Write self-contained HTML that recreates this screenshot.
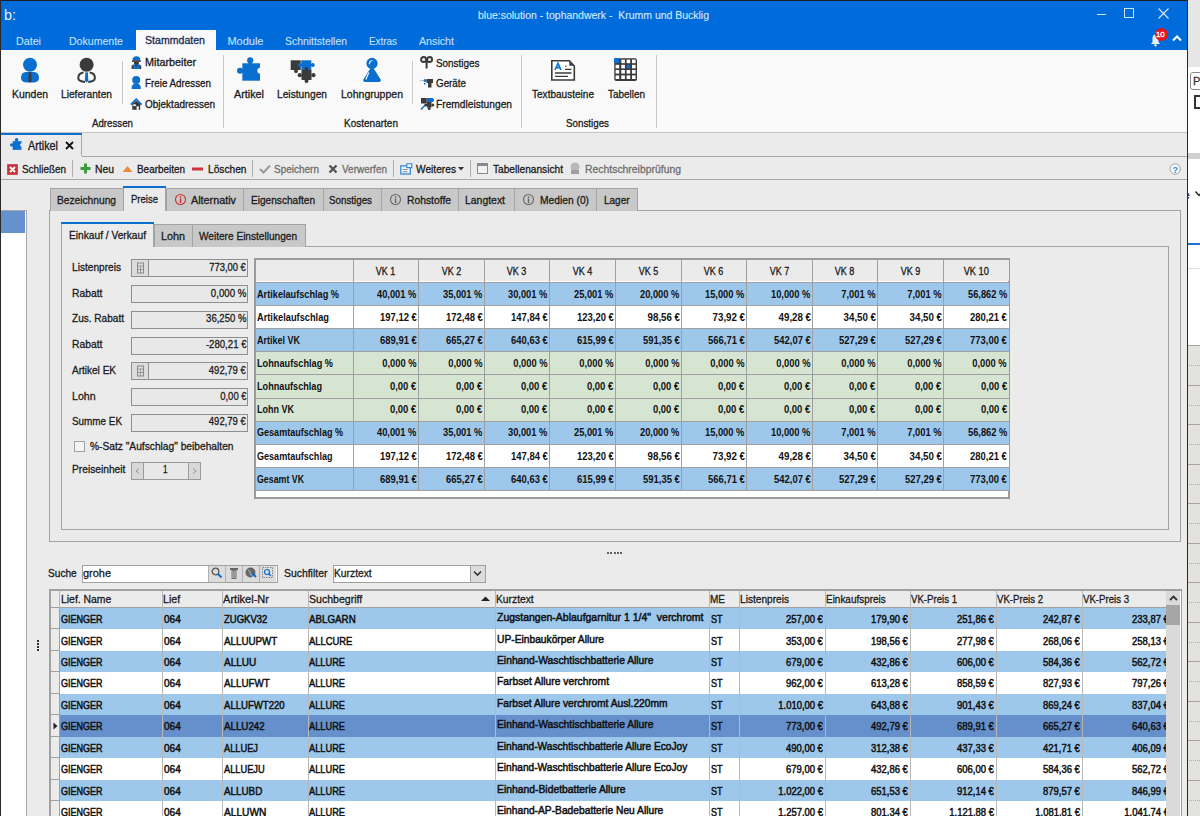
<!DOCTYPE html><html><head><meta charset="utf-8"><style>

*{margin:0;padding:0;box-sizing:border-box}
html,body{width:1200px;height:816px;overflow:hidden;background:#ebebeb;font-family:"Liberation Sans",sans-serif;font-size:11px;color:#1a1a1a}
.ab{position:absolute}
.t{position:absolute;white-space:nowrap;line-height:1;-webkit-text-stroke:0.3px currentColor}
svg{position:absolute;overflow:visible}

</style></head><body>
<div class="ab" style="left:0;top:0;width:1188px;height:50px;background:#006cdb"></div>
<div class="ab" style="left:0;top:0;width:1189px;height:1px;background:#1f1f1f"></div>
<div class="t" style="left:4.40px;top:6.90px;font-size:15px;color:#e8f2ff;transform:scaleX(0.9588);transform-origin:0 0;-webkit-text-stroke:0px currentColor;">b:</div>
<div class="t" style="left:478.40px;top:9.99px;font-size:11px;color:#d8ebff;transform:scaleX(0.9517);transform-origin:0 0;-webkit-text-stroke:0.1px currentColor;">blue:solution - tophandwerk -&nbsp; Krumm und Bucklig</div>
<div class="ab" style="left:1097px;top:14px;width:9px;height:1px;background:#cfe4ff"></div>
<div class="ab" style="left:1124px;top:8px;width:10px;height:10px;border:1px solid #cfe4ff"></div>
<svg style="left:1158px;top:8px" width="11" height="11"><path d="M0.5 0.5L10.5 10.5M10.5 0.5L0.5 10.5" stroke="#dbeaff" stroke-width="1.1"/></svg>
<svg style="left:1149px;top:33px" width="14" height="14"><path d="M2 11 L3.5 9 L3.5 5.5 Q3.5 1.5 6.5 1.5 Q9.5 1.5 9.5 5.5 L9.5 9 L11 11 Z" fill="#e6f1ff"/><circle cx="6.5" cy="12.3" r="1.2" fill="#e6f1ff"/></svg>
<div class="ab" style="left:1155px;top:28px;width:13px;height:13px;border-radius:50%;background:#e8141c"></div>
<div class="t" style="left:1156px;top:30.5px;font-size:8px;color:#fff;letter-spacing:-0.3px">10</div>
<svg style="left:1172px;top:35px" width="10" height="7"><path d="M1 5.5 L5 1.5 L9 5.5" stroke="#ffffff" stroke-width="2" fill="none"/></svg>
<div class="t" style="left:16.40px;top:36.09px;font-size:11px;color:#c7e1ff;transform:scaleX(0.9732);transform-origin:0 0;-webkit-text-stroke:0.1px currentColor;">Datei</div>
<div class="t" style="left:69.40px;top:36.09px;font-size:11px;color:#c7e1ff;transform:scaleX(0.9597);transform-origin:0 0;-webkit-text-stroke:0.1px currentColor;">Dokumente</div>
<div class="t" style="left:227.40px;top:36.09px;font-size:11px;color:#c7e1ff;-webkit-text-stroke:0.1px currentColor;">Module</div>
<div class="t" style="left:285.40px;top:36.09px;font-size:11px;color:#c7e1ff;transform:scaleX(0.9475);transform-origin:0 0;-webkit-text-stroke:0.1px currentColor;">Schnittstellen</div>
<div class="t" style="left:369.40px;top:36.09px;font-size:11px;color:#c7e1ff;transform:scaleX(0.8978);transform-origin:0 0;-webkit-text-stroke:0.1px currentColor;">Extras</div>
<div class="t" style="left:419.40px;top:36.09px;font-size:11px;color:#c7e1ff;transform:scaleX(0.9701);transform-origin:0 0;-webkit-text-stroke:0.1px currentColor;">Ansicht</div>
<div class="ab" style="left:136px;top:30px;width:80px;height:21px;background:#f9f9f9"></div>
<div class="t" style="left:145.40px;top:35.09px;font-size:11px;color:#1b2b55;transform:scaleX(0.9619);transform-origin:0 0;">Stammdaten</div>
<div class="ab" style="left:1px;top:50px;width:1186px;height:82px;background:#f9f9f9"></div>
<div class="ab" style="left:1px;top:132px;width:1186px;height:1px;background:#c4c4c4"></div>
<div class="ab" style="left:122px;top:61px;width:1px;height:43px;background:#c8c8c8"></div>
<div class="ab" style="left:223px;top:55px;width:1px;height:73px;background:#c8c8c8"></div>
<div class="ab" style="left:412px;top:61px;width:1px;height:43px;background:#c8c8c8"></div>
<div class="ab" style="left:521px;top:55px;width:1px;height:73px;background:#c8c8c8"></div>
<div class="ab" style="left:656px;top:55px;width:1px;height:73px;background:#c8c8c8"></div>
<div class="t" style="left:12.40px;top:88.59px;font-size:11px;color:#1a1a1a;transform:scaleX(0.9489);transform-origin:0 0;">Kunden</div>
<div class="t" style="left:61.40px;top:88.59px;font-size:11px;color:#1a1a1a;transform:scaleX(0.9265);transform-origin:0 0;">Lieferanten</div>
<div class="t" style="left:234.40px;top:88.59px;font-size:11px;color:#1a1a1a;transform:scaleX(0.9816);transform-origin:0 0;">Artikel</div>
<div class="t" style="left:277.40px;top:88.59px;font-size:11px;color:#1a1a1a;transform:scaleX(0.9289);transform-origin:0 0;">Leistungen</div>
<div class="t" style="left:340.90px;top:88.59px;font-size:11px;color:#1a1a1a;transform:scaleX(0.9561);transform-origin:0 0;">Lohngruppen</div>
<div class="t" style="left:531.80px;top:88.59px;font-size:11px;color:#1a1a1a;transform:scaleX(0.9132);transform-origin:0 0;">Textbausteine</div>
<div class="t" style="left:607.70px;top:88.59px;font-size:11px;color:#1a1a1a;transform:scaleX(0.9028);transform-origin:0 0;">Tabellen</div>
<div class="t" style="left:91.70px;top:118.19px;font-size:11px;color:#1a1a1a;transform:scaleX(0.8820);transform-origin:0 0;">Adressen</div>
<div class="t" style="left:344.40px;top:118.19px;font-size:11px;color:#1a1a1a;transform:scaleX(0.9102);transform-origin:0 0;">Kostenarten</div>
<div class="t" style="left:566.40px;top:118.19px;font-size:11px;color:#1a1a1a;transform:scaleX(0.8900);transform-origin:0 0;">Sonstiges</div>
<div class="t" style="left:145.40px;top:57.49px;font-size:11px;color:#1a1a1a;transform:scaleX(0.9814);transform-origin:0 0;">Mitarbeiter</div>
<div class="t" style="left:145.40px;top:78.19px;font-size:11px;color:#1a1a1a;transform:scaleX(0.8921);transform-origin:0 0;">Freie Adressen</div>
<div class="t" style="left:145.40px;top:98.59px;font-size:11px;color:#1a1a1a;transform:scaleX(0.9085);transform-origin:0 0;">Objektadressen</div>
<div class="t" style="left:435.80px;top:57.69px;font-size:11px;color:#1a1a1a;transform:scaleX(0.9004);transform-origin:0 0;">Sonstiges</div>
<div class="t" style="left:435.80px;top:78.19px;font-size:11px;color:#1a1a1a;transform:scaleX(0.8918);transform-origin:0 0;">Geräte</div>
<div class="t" style="left:435.80px;top:98.69px;font-size:11px;color:#1a1a1a;transform:scaleX(0.9275);transform-origin:0 0;">Fremdleistungen</div>
<svg style="left:20px;top:57px" width="20" height="27"><circle cx="10" cy="7.75" r="7" fill="#0a6fcf"/><path d="M1 21 Q1 15.2 6 15 L14 15 Q19 15.2 19 21 Q19 25 14 25.4 L6 25.4 Q1 25 1 21Z" fill="#0a6fcf"/><path d="M8.7 15.2 L11.3 15.2 L11.7 24.3 L10 25.5 L8.3 24.3Z" fill="#3a3a3a"/></svg>
<svg style="left:77px;top:57px" width="20" height="27"><circle cx="9.6" cy="7.75" r="7" fill="#3a3a3a"/><path d="M6.5 15.6 Q1.2 16.4 1.3 21.2 Q1.6 24.6 8 25 M12.7 15.6 Q18 16.4 17.9 21.2 Q17.6 24.6 11.2 25" stroke="#3a3a3a" stroke-width="2" fill="none"/><path d="M8.4 15.2 L10.8 15.2 L11.4 23.8 L9.6 25.4 L7.8 23.8Z" fill="#0a6fcf"/></svg>
<svg style="left:131px;top:56px" width="11" height="14"><path d="M1.5 4.5 Q1.5 0.3 5.4 0.3 Q9.3 0.3 9.3 4.5Z" fill="#0a6fcf"/><rect x="1" y="4.3" width="8.8" height="1.6" fill="#3a3a3a"/><rect x="3" y="5.9" width="4.8" height="2.4" fill="#3a3a3a"/><path d="M1 13 L1 10.5 Q1 8.3 3.2 8.3 L7.6 8.3 Q9.8 8.3 9.8 10.5 L9.8 13Z" fill="#0a6fcf"/><rect x="0.6" y="9.5" width="1.4" height="3.5" fill="#3a3a3a"/><rect x="8.8" y="9.5" width="1.4" height="3.5" fill="#3a3a3a"/><rect x="4" y="8.3" width="2.8" height="2" fill="#3a3a3a"/></svg>
<svg style="left:131px;top:75px" width="11" height="15"><circle cx="5.2" cy="5" r="4" fill="#0a6fcf"/><path d="M0.5 14 Q0.5 8.6 5.2 8.6 Q9.9 8.6 9.9 14Z" fill="#0a6fcf"/></svg>
<svg style="left:130px;top:98px" width="13" height="12"><path d="M0.8 6.6 L6.2 1.2 L11.6 6.6" stroke="#0a6fcf" stroke-width="1.7" fill="none"/><path d="M2.3 6 L6.2 2.7 L10.2 6 L10.2 11.7 L2.3 11.7Z" fill="#3a3a3a"/><rect x="3.3" y="6.3" width="2.5" height="1.8" fill="#fff"/><rect x="6.6" y="8.3" width="2.2" height="3.4" fill="#f9f9f9"/></svg>
<svg style="left:237px;top:57px" width="26" height="25"><rect x="5.3" y="6.3" width="17.7" height="17.4" fill="#0a6fcf"/><circle cx="13.2" cy="3.4" r="3.1" fill="#0a6fcf"/><rect x="11.6" y="4" width="3.2" height="3" fill="#0a6fcf"/><circle cx="3" cy="13.8" r="3" fill="#0a6fcf"/><rect x="3.5" y="12.2" width="3" height="3.2" fill="#0a6fcf"/><circle cx="23.3" cy="13.8" r="3" fill="#f9f9f9"/></svg>
<svg style="left:290px;top:58px" width="26" height="26"><path d="M0.7 2.3 H10.7 V12 H0.7Z" fill="#3a3a3a"/><circle cx="6" cy="13.2" r="1.9" fill="#3a3a3a"/><path d="M11.3 2.3 H21.3 V12 H11.3Z" fill="#0a6fcf"/><circle cx="10" cy="7" r="2" fill="#0a6fcf"/><circle cx="22.8" cy="7" r="2" fill="#0a6fcf"/><path d="M11.5 12 H21.5 V22 H11.5Z" fill="#3a3a3a"/><circle cx="9.8" cy="17.2" r="2.1" fill="#3a3a3a"/><circle cx="23.4" cy="17.2" r="2.1" fill="#3a3a3a"/><circle cx="16.5" cy="23" r="2" fill="#3a3a3a"/><circle cx="16.5" cy="11" r="2" fill="#3a3a3a"/></svg>
<svg style="left:362px;top:57px" width="22" height="26"><circle cx="10" cy="6.4" r="5.6" fill="#0a6fcf"/><path d="M7.4 7.2 Q7.4 3.8 10.4 3.5" stroke="#f9f9f9" stroke-width="1.2" fill="none"/><rect x="7.8" y="11" width="4.4" height="2.5" fill="#0a6fcf"/><path d="M7.3 13 L12.7 13 L18.6 22.6 Q19.2 25 17 25 L3 25 Q0.8 25 1.4 22.6Z" fill="#0a6fcf"/><path d="M6.8 15.5 L3.8 22.5" stroke="#f9f9f9" stroke-width="1.2"/></svg>
<svg style="left:420px;top:56px" width="14" height="13"><circle cx="3.6" cy="3.5" r="2.5" fill="none" stroke="#3a3a3a" stroke-width="1.9"/><circle cx="9.6" cy="3.5" r="2.5" fill="none" stroke="#3a3a3a" stroke-width="1.9"/><rect x="5.6" y="4.5" width="2" height="8" fill="#3a3a3a"/><rect x="5" y="4" width="3.2" height="2.4" fill="#3a3a3a"/></svg>
<svg style="left:420px;top:78px" width="14" height="11"><rect x="0" y="2" width="1.2" height="1" fill="#aaa"/><rect x="2" y="2" width="1.2" height="1" fill="#aaa"/><circle cx="5" cy="2.6" r="1.5" fill="#0a6fcf"/><rect x="4" y="5" width="1.5" height="1.5" fill="#0a6fcf"/><path d="M6.5 1 L13 1 L13 5 L11.5 5 L11.5 9.5 L8 9.5 L8 5 L6.5 5Z" fill="#3a3a3a"/></svg>
<svg style="left:420px;top:97px" width="14" height="14"><path d="M1 1 H6.8 V6.5 H1Z" fill="#3a3a3a"/><path d="M7 1 H13 V5 H7Z" fill="#0a6fcf"/><circle cx="13" cy="3" r="1.2" fill="#0a6fcf"/><path d="M7 5 H11.5 V10.5 H7Z" fill="#3a3a3a"/><circle cx="5.8" cy="8" r="1.6" fill="#3a3a3a"/><circle cx="12.8" cy="8" r="1.5" fill="#3a3a3a"/><circle cx="9.2" cy="11.5" r="1.5" fill="#3a3a3a"/><path d="M1 12.5 L4.8 8.5" stroke="#0a6fcf" stroke-width="1.5"/></svg>
<svg style="left:551px;top:60px" width="25" height="22"><path d="M0.8 0.8 L18.3 0.8 L23.3 6 L23.3 20 L0.8 20Z" fill="#fff" stroke="#3a3a3a" stroke-width="1.6"/><path d="M18.3 1.5 L18.3 5.8 L22.6 5.8" fill="#3a3a3a" stroke="none"/><path d="M4 10 L7 3.2 L10 10 M5.2 7.6 L8.8 7.6" stroke="#0a6fcf" stroke-width="1.6" fill="none"/><rect x="14.3" y="5.5" width="1.3" height="1.3" fill="#3a3a3a"/><path d="M14 9.3 H20.5 M4 13 H20.5 M4 16.3 H17" stroke="#3a3a3a" stroke-width="1.3"/></svg>
<svg style="left:614px;top:58px" width="24" height="24"><rect x="0.3" y="0.3" width="22.7" height="22.7" rx="2" fill="#3a3a3a"/><rect x="1.6" y="1.6" width="3.6" height="3.6" fill="#0a6fcf"/><rect x="1.6" y="6.8" width="3.6" height="3.6" fill="#fff"/><rect x="1.6" y="12.0" width="3.6" height="3.6" fill="#fff"/><rect x="1.6" y="17.4" width="3.6" height="3.6" fill="#fff"/><rect x="7.3" y="1.6" width="3.6" height="3.6" fill="#fff"/><rect x="7.3" y="6.8" width="3.6" height="3.6" fill="#fff"/><rect x="7.3" y="12.0" width="3.6" height="3.6" fill="#fff"/><rect x="7.3" y="17.4" width="3.6" height="3.6" fill="#fff"/><rect x="12.6" y="1.6" width="3.6" height="3.6" fill="#fff"/><rect x="12.6" y="6.8" width="3.6" height="3.6" fill="#0a6fcf"/><rect x="12.6" y="12.0" width="3.6" height="3.6" fill="#fff"/><rect x="12.6" y="17.4" width="3.6" height="3.6" fill="#fff"/><rect x="18.0" y="1.6" width="3.6" height="3.6" fill="#fff"/><rect x="18.0" y="6.8" width="3.6" height="3.6" fill="#fff"/><rect x="18.0" y="12.0" width="3.6" height="3.6" fill="#fff"/><rect x="18.0" y="17.4" width="3.6" height="3.6" fill="#fff"/><rect x="0" y="0" width="5.2" height="5" rx="1" fill="#0a6fcf"/></svg>
<div class="ab" style="left:1px;top:133px;width:1186px;height:23px;background:#ebebeb"></div>
<div class="ab" style="left:82px;top:156px;width:1105px;height:1px;background:#a9a9a9"></div>
<div class="ab" style="left:1px;top:133px;width:81px;height:2px;background:#0a6fcf"></div>
<div class="ab" style="left:81px;top:135px;width:1px;height:21px;background:#a9a9a9"></div>
<svg style="left:9.5px;top:138px" width="13" height="13"><g transform="scale(0.5)"><rect x="5.3" y="6.3" width="17.7" height="17.4" fill="#0a6fcf"/><circle cx="13.2" cy="3.6" r="3.4" fill="#0a6fcf"/><rect x="11.4" y="4" width="3.6" height="3" fill="#0a6fcf"/><circle cx="3.2" cy="13.8" r="3.2" fill="#0a6fcf"/><rect x="3.5" y="12" width="3" height="3.6" fill="#0a6fcf"/><circle cx="23.3" cy="13.8" r="3.2" fill="#ebebeb"/></g></svg>
<div class="t" style="left:28.10px;top:139.84px;font-size:12px;color:#1a1a1a;transform:scaleX(0.8997);transform-origin:0 0;">Artikel</div>
<svg style="left:65px;top:141px" width="9" height="9"><path d="M1 1L8 8M8 1L1 8" stroke="#111" stroke-width="1.8"/></svg>
<div class="ab" style="left:1px;top:179px;width:1186px;height:1px;background:#a9a9a9"></div>
<div class="ab" style="left:72px;top:160px;width:1px;height:17px;background:#b0b0b0"></div>
<div class="ab" style="left:252px;top:160px;width:1px;height:17px;background:#b0b0b0"></div>
<div class="ab" style="left:393px;top:160px;width:1px;height:17px;background:#b0b0b0"></div>
<div class="ab" style="left:470px;top:160px;width:1px;height:17px;background:#b0b0b0"></div>
<svg style="left:7px;top:164px" width="11" height="11"><rect x="0.7" y="0.7" width="9.6" height="9.6" fill="#c8343c" stroke="#c8343c"/><path d="M3 3L8 8M8 3L3 8" stroke="#fff" stroke-width="1.8"/></svg>
<div class="t" style="left:21.80px;top:163.79px;font-size:11px;color:#1a1a1a;transform:scaleX(0.8994);transform-origin:0 0;">Schließen</div>
<svg style="left:80px;top:163px" width="11" height="11"><path d="M4 0.5H7V4H10.5V7H7V10.5H4V7H0.5V4H4Z" fill="#3d9b3d"/></svg>
<div class="t" style="left:94.70px;top:163.79px;font-size:11px;color:#1a1a1a;transform:scaleX(0.9412);transform-origin:0 0;">Neu</div>
<svg style="left:122px;top:165px" width="11" height="8"><path d="M0.5 7 L5.5 1 L10.5 7Z" fill="#ef8a3c"/></svg>
<div class="t" style="left:136.70px;top:163.79px;font-size:11px;color:#1a1a1a;transform:scaleX(0.9019);transform-origin:0 0;">Bearbeiten</div>
<svg style="left:192px;top:167px" width="11" height="4"><rect x="0" y="0.5" width="11" height="3" fill="#c8343c"/></svg>
<div class="t" style="left:207.70px;top:163.79px;font-size:11px;color:#1a1a1a;transform:scaleX(0.9256);transform-origin:0 0;">Löschen</div>
<svg style="left:259px;top:164px" width="12" height="10"><path d="M1 5 L4.5 8.5 L11 1.5" stroke="#9a9a9a" stroke-width="2" fill="none"/></svg>
<div class="t" style="left:274.40px;top:163.79px;font-size:11px;color:#6f6f6f;transform:scaleX(0.9082);transform-origin:0 0;">Speichern</div>
<svg style="left:328px;top:164px" width="10" height="10"><path d="M1.5 1.5L8.5 8.5M8.5 1.5L1.5 8.5" stroke="#555" stroke-width="2.4"/></svg>
<div class="t" style="left:341.90px;top:163.79px;font-size:11px;color:#6f6f6f;transform:scaleX(0.9085);transform-origin:0 0;">Verwerfen</div>
<svg style="left:400px;top:163px" width="13" height="12"><rect x="0.8" y="2.8" width="9.5" height="8.2" fill="#eaf3fc" stroke="#3a8ad6" stroke-width="1.3"/><rect x="6.8" y="0.8" width="5" height="3.8" fill="#fff" stroke="#3a8ad6" stroke-width="1.2"/><path d="M2.8 6.5H7.5M2.8 8.8H7.5" stroke="#8a8a8a" stroke-width="1"/></svg>
<div class="t" style="left:415.90px;top:163.79px;font-size:11px;color:#1a1a1a;transform:scaleX(0.9259);transform-origin:0 0;">Weiteres</div>
<svg style="left:458px;top:167px" width="6" height="4"><path d="M0 0H6L3 3.5Z" fill="#333"/></svg>
<svg style="left:477px;top:163px" width="11" height="11"><rect x="0.5" y="0.5" width="10" height="10" fill="#f2f2f2" stroke="#8a8a8a"/><rect x="0.5" y="0.5" width="10" height="2.5" fill="#8a8a8a"/></svg>
<div class="t" style="left:492.70px;top:163.79px;font-size:11px;color:#1a1a1a;transform:scaleX(0.9230);transform-origin:0 0;">Tabellenansicht</div>
<svg style="left:569px;top:162px" width="12" height="13"><circle cx="6" cy="5" r="4.5" fill="#b8b8b8"/><rect x="2" y="8" width="8" height="4" fill="#a0a0a0"/></svg>
<div class="t" style="left:584.70px;top:163.79px;font-size:11px;color:#6f6f6f;transform:scaleX(0.9457);transform-origin:0 0;">Rechtschreibprüfung</div>
<svg style="left:1169px;top:163px" width="13" height="13"><circle cx="6.2" cy="6" r="5.2" fill="#f4f8fc" stroke="#9a9a9a" stroke-width="0.9"/><text x="6.2" y="9.6" font-size="9" font-weight="bold" text-anchor="middle" fill="#2a8ad8" font-family="Liberation Sans">?</text></svg>
<div class="ab" style="left:1px;top:210px;width:26px;height:606px;background:#fff;border-top:1px solid #a9a9a9;border-right:1px solid #a9a9a9"></div>
<div class="ab" style="left:1px;top:211px;width:24px;height:22px;background:#6591cf"></div>
<div class="ab" style="left:37px;top:640px;width:2px;height:2px;background:#333"></div>
<div class="ab" style="left:37px;top:643px;width:2px;height:2px;background:#333"></div>
<div class="ab" style="left:37px;top:646px;width:2px;height:2px;background:#333"></div>
<div class="ab" style="left:37px;top:649px;width:2px;height:2px;background:#333"></div>
<div class="ab" style="left:0;top:0;width:1px;height:816px;background:#2a2a2a"></div>
<div class="ab" style="left:49px;top:210px;width:1132px;height:332px;border:1px solid #a3a3a3"></div>
<div class="ab" style="left:50px;top:188px;width:74px;height:23px;background:#c8c8c8;border:1px solid #a3a3a3;border-bottom:none"></div>
<div class="t" style="left:57.00px;top:195.39px;font-size:11px;color:#1a1a1a;transform:scaleX(0.9275);transform-origin:0 0;">Bezeichnung</div>
<div class="ab" style="left:123px;top:186px;width:43px;height:25px;background:#ebebeb;border-left:1px solid #a3a3a3;border-right:1px solid #a3a3a3"></div>
<div class="ab" style="left:123px;top:186px;width:43px;height:2px;background:#0a6fcf"></div>
<div class="t" style="left:131.10px;top:194.39px;font-size:11px;color:#1a1a1a;transform:scaleX(0.8657);transform-origin:0 0;">Preise</div>
<div class="ab" style="left:166px;top:188px;width:78px;height:23px;background:#c8c8c8;border:1px solid #a3a3a3;border-bottom:none"></div>
<svg style="left:174.5px;top:194px" width="12" height="12"><circle cx="5.5" cy="5.5" r="5" fill="none" stroke="#c9302c" stroke-width="1.1"/><rect x="4.8" y="2.4" width="1.5" height="1.5" fill="#c9302c"/><rect x="4.8" y="4.6" width="1.5" height="4.4" fill="#c9302c"/></svg>
<div class="t" style="left:191.40px;top:195.39px;font-size:11px;color:#1a1a1a;transform:scaleX(0.9813);transform-origin:0 0;">Alternativ</div>
<div class="ab" style="left:243px;top:188px;width:81px;height:23px;background:#c8c8c8;border:1px solid #a3a3a3;border-bottom:none"></div>
<div class="t" style="left:250.80px;top:195.39px;font-size:11px;color:#1a1a1a;transform:scaleX(0.9180);transform-origin:0 0;">Eigenschaften</div>
<div class="ab" style="left:323px;top:188px;width:59px;height:23px;background:#c8c8c8;border:1px solid #a3a3a3;border-bottom:none"></div>
<div class="t" style="left:329.40px;top:195.39px;font-size:11px;color:#1a1a1a;transform:scaleX(0.8900);transform-origin:0 0;">Sonstiges</div>
<div class="ab" style="left:381px;top:188px;width:78px;height:23px;background:#c8c8c8;border:1px solid #a3a3a3;border-bottom:none"></div>
<svg style="left:389.5px;top:194px" width="12" height="12"><circle cx="5.5" cy="5.5" r="5" fill="none" stroke="#666" stroke-width="1.1"/><rect x="4.8" y="2.4" width="1.5" height="1.5" fill="#666"/><rect x="4.8" y="4.6" width="1.5" height="4.4" fill="#666"/></svg>
<div class="t" style="left:406.70px;top:195.39px;font-size:11px;color:#1a1a1a;transform:scaleX(0.9384);transform-origin:0 0;">Rohstoffe</div>
<div class="ab" style="left:458px;top:188px;width:57px;height:23px;background:#c8c8c8;border:1px solid #a3a3a3;border-bottom:none"></div>
<div class="t" style="left:465.40px;top:195.39px;font-size:11px;color:#1a1a1a;transform:scaleX(0.9478);transform-origin:0 0;">Langtext</div>
<div class="ab" style="left:514px;top:188px;width:83px;height:23px;background:#c8c8c8;border:1px solid #a3a3a3;border-bottom:none"></div>
<svg style="left:522.5px;top:194px" width="12" height="12"><circle cx="5.5" cy="5.5" r="5" fill="none" stroke="#666" stroke-width="1.1"/><rect x="4.8" y="2.4" width="1.5" height="1.5" fill="#666"/><rect x="4.8" y="4.6" width="1.5" height="4.4" fill="#666"/></svg>
<div class="t" style="left:539.70px;top:195.39px;font-size:11px;color:#1a1a1a;transform:scaleX(0.9319);transform-origin:0 0;">Medien (0)</div>
<div class="ab" style="left:596px;top:188px;width:42px;height:23px;background:#c8c8c8;border:1px solid #a3a3a3;border-bottom:none"></div>
<div class="t" style="left:603.90px;top:195.39px;font-size:11px;color:#1a1a1a;transform:scaleX(0.9062);transform-origin:0 0;">Lager</div>
<div class="ab" style="left:61px;top:246px;width:1108px;height:284px;border:1px solid #a3a3a3"></div>
<div class="ab" style="left:61px;top:222px;width:93px;height:25px;background:#ebebeb;border-left:1px solid #a3a3a3;border-right:1px solid #a3a3a3"></div>
<div class="ab" style="left:61px;top:222px;width:93px;height:2px;background:#0a6fcf"></div>
<div class="t" style="left:69.00px;top:229.99px;font-size:11px;color:#1a1a1a;transform:scaleX(0.9258);transform-origin:0 0;">Einkauf / Verkauf</div>
<div class="ab" style="left:154px;top:224px;width:39px;height:23px;background:#c8c8c8;border:1px solid #a3a3a3;border-bottom:none"></div>
<div class="t" style="left:160.70px;top:230.69px;font-size:11px;color:#1a1a1a;transform:scaleX(0.9802);transform-origin:0 0;">Lohn</div>
<div class="ab" style="left:192px;top:224px;width:114px;height:23px;background:#c8c8c8;border:1px solid #a3a3a3;border-bottom:none"></div>
<div class="t" style="left:199.40px;top:230.69px;font-size:11px;color:#1a1a1a;transform:scaleX(0.9175);transform-origin:0 0;">Weitere Einstellungen</div>
<div class="t" style="left:72.10px;top:261.99px;font-size:11px;color:#1a1a1a;transform:scaleX(0.9210);transform-origin:0 0;">Listenpreis</div>
<div class="ab" style="left:131px;top:259px;width:117px;height:18px;background:#e8e8e8;border:1px solid #8f8f8f"></div>
<div class="ab" style="left:132px;top:260px;width:17px;height:16px;background:#dcdcdc;border-right:1px solid #8f8f8f"></div>
<svg style="left:136px;top:262px" width="9" height="12"><rect x="1.5" y="1" width="6" height="10" fill="none" stroke="#8a8a8a"/><path d="M1.5 4H7.5M4.5 4V11M1.5 7.5H7.5" stroke="#8a8a8a" stroke-width="0.8"/></svg>
<div class="t" style="right:953.70px;top:261.99px;font-size:11px;color:#1a1a1a;transform:scaleX(0.8546);transform-origin:100% 0;">773,00 €</div>
<div class="t" style="left:72.10px;top:287.74px;font-size:11px;color:#1a1a1a;transform:scaleX(0.9376);transform-origin:0 0;">Rabatt</div>
<div class="ab" style="left:131px;top:285px;width:117px;height:18px;background:#e8e8e8;border:1px solid #8f8f8f"></div>
<div class="t" style="right:953.70px;top:287.74px;font-size:11px;color:#1a1a1a;transform:scaleX(0.8793);transform-origin:100% 0;">0,000 %</div>
<div class="t" style="left:72.10px;top:313.49px;font-size:11px;color:#1a1a1a;transform:scaleX(0.9145);transform-origin:0 0;">Zus. Rabatt</div>
<div class="ab" style="left:131px;top:311px;width:117px;height:18px;background:#e8e8e8;border:1px solid #8f8f8f"></div>
<div class="t" style="right:953.70px;top:313.49px;font-size:11px;color:#1a1a1a;transform:scaleX(0.8691);transform-origin:100% 0;">36,250 %</div>
<div class="t" style="left:72.10px;top:339.24px;font-size:11px;color:#1a1a1a;transform:scaleX(0.9376);transform-origin:0 0;">Rabatt</div>
<div class="ab" style="left:131px;top:337px;width:117px;height:18px;background:#e8e8e8;border:1px solid #8f8f8f"></div>
<div class="t" style="right:953.70px;top:339.24px;font-size:11px;color:#1a1a1a;transform:scaleX(0.8734);transform-origin:100% 0;">-280,21 €</div>
<div class="t" style="left:72.10px;top:364.99px;font-size:11px;color:#1a1a1a;transform:scaleX(0.9110);transform-origin:0 0;">Artikel EK</div>
<div class="ab" style="left:131px;top:362px;width:117px;height:18px;background:#e8e8e8;border:1px solid #8f8f8f"></div>
<div class="ab" style="left:132px;top:363px;width:17px;height:16px;background:#dcdcdc;border-right:1px solid #8f8f8f"></div>
<svg style="left:136px;top:365px" width="9" height="12"><rect x="1.5" y="1" width="6" height="10" fill="none" stroke="#8a8a8a"/><path d="M1.5 4H7.5M4.5 4V11M1.5 7.5H7.5" stroke="#8a8a8a" stroke-width="0.8"/></svg>
<div class="t" style="right:953.70px;top:364.99px;font-size:11px;color:#1a1a1a;transform:scaleX(0.8639);transform-origin:100% 0;">492,79 €</div>
<div class="t" style="left:72.10px;top:390.74px;font-size:11px;color:#1a1a1a;transform:scaleX(0.9639);transform-origin:0 0;">Lohn</div>
<div class="ab" style="left:131px;top:388px;width:117px;height:18px;background:#e8e8e8;border:1px solid #8f8f8f"></div>
<div class="t" style="right:953.70px;top:390.74px;font-size:11px;color:#1a1a1a;transform:scaleX(0.8629);transform-origin:100% 0;">0,00 €</div>
<div class="t" style="left:72.10px;top:416.49px;font-size:11px;color:#1a1a1a;transform:scaleX(0.8986);transform-origin:0 0;">Summe EK</div>
<div class="ab" style="left:131px;top:414px;width:117px;height:18px;background:#e8e8e8;border:1px solid #8f8f8f"></div>
<div class="t" style="right:953.70px;top:416.49px;font-size:11px;color:#1a1a1a;transform:scaleX(0.8639);transform-origin:100% 0;">492,79 €</div>
<div class="ab" style="left:74px;top:441px;width:11px;height:11px;background:#f4f4f4;border:1px solid #a0a0a0"></div>
<div class="t" style="left:89.70px;top:440.69px;font-size:11px;color:#1a1a1a;transform:scaleX(0.9283);transform-origin:0 0;">%-Satz "Aufschlag" beibehalten</div>
<div class="t" style="left:72.30px;top:464.49px;font-size:11px;color:#1a1a1a;transform:scaleX(0.9289);transform-origin:0 0;">Preiseinheit</div>
<div class="ab" style="left:131px;top:462px;width:70px;height:18px;background:#e8e8e8;border:1px solid #9a9a9a"></div>
<div class="ab" style="left:132px;top:463px;width:12px;height:16px;background:#d8d8d8;border-right:1px solid #9a9a9a"></div>
<div class="ab" style="left:188px;top:463px;width:12px;height:16px;background:#d8d8d8;border-left:1px solid #9a9a9a"></div>
<svg style="left:135px;top:468px" width="5" height="6"><path d="M4 0.5 L1 3 L4 5.5" stroke="#999" fill="none"/></svg>
<svg style="left:192px;top:468px" width="5" height="6"><path d="M1 0.5 L4 3 L1 5.5" stroke="#999" fill="none"/></svg>
<div class="t" style="left:162.90px;top:464.49px;font-size:11px;color:#1a1a1a;transform:scaleX(0.7347);transform-origin:0 0;">1</div>
<div class="ab" style="left:254px;top:258px;width:756px;height:241px;background:#fff;border:2px solid #9b9b9b"></div>
<div class="ab" style="left:256px;top:260px;width:753px;height:21px;background:#ebebeb"></div>
<div class="t" style="left:374.12px;width:22.77px;text-align:center;top:266.11px;font-size:10.5px;color:#1a1a1a;transform:scaleX(0.8566);transform-origin:50% 0;-webkit-text-stroke:0.3px currentColor;">VK 1</div>
<div class="t" style="left:439.62px;width:22.77px;text-align:center;top:266.11px;font-size:10.5px;color:#1a1a1a;transform:scaleX(0.8566);transform-origin:50% 0;-webkit-text-stroke:0.3px currentColor;">VK 2</div>
<div class="t" style="left:505.12px;width:22.77px;text-align:center;top:266.11px;font-size:10.5px;color:#1a1a1a;transform:scaleX(0.8566);transform-origin:50% 0;-webkit-text-stroke:0.3px currentColor;">VK 3</div>
<div class="t" style="left:570.62px;width:22.77px;text-align:center;top:266.11px;font-size:10.5px;color:#1a1a1a;transform:scaleX(0.8566);transform-origin:50% 0;-webkit-text-stroke:0.3px currentColor;">VK 4</div>
<div class="t" style="left:636.62px;width:22.77px;text-align:center;top:266.11px;font-size:10.5px;color:#1a1a1a;transform:scaleX(0.8566);transform-origin:50% 0;-webkit-text-stroke:0.3px currentColor;">VK 5</div>
<div class="t" style="left:702.12px;width:22.77px;text-align:center;top:266.11px;font-size:10.5px;color:#1a1a1a;transform:scaleX(0.8566);transform-origin:50% 0;-webkit-text-stroke:0.3px currentColor;">VK 6</div>
<div class="t" style="left:767.62px;width:22.77px;text-align:center;top:266.11px;font-size:10.5px;color:#1a1a1a;transform:scaleX(0.8566);transform-origin:50% 0;-webkit-text-stroke:0.3px currentColor;">VK 7</div>
<div class="t" style="left:833.12px;width:22.77px;text-align:center;top:266.11px;font-size:10.5px;color:#1a1a1a;transform:scaleX(0.8566);transform-origin:50% 0;-webkit-text-stroke:0.3px currentColor;">VK 8</div>
<div class="t" style="left:898.62px;width:22.77px;text-align:center;top:266.11px;font-size:10.5px;color:#1a1a1a;transform:scaleX(0.8566);transform-origin:50% 0;-webkit-text-stroke:0.3px currentColor;">VK 9</div>
<div class="t" style="left:961.70px;width:28.61px;text-align:center;top:266.11px;font-size:10.5px;color:#1a1a1a;transform:scaleX(0.8843);transform-origin:50% 0;-webkit-text-stroke:0.3px currentColor;">VK 10</div>
<div class="ab" style="left:256px;top:282px;width:753px;height:23px;background:#9dc8ec;border-top:1px solid #a0a0a0"></div>
<div class="t" style="left:256.70px;top:288.81px;font-size:10.5px;color:#111;font-weight:700;transform:scaleX(0.8728);transform-origin:0 0;-webkit-text-stroke:0px currentColor;">Artikelaufschlag %</div>
<div class="t" style="right:783.40px;top:288.81px;font-size:10.5px;color:#111;font-weight:700;transform:scaleX(0.8879);transform-origin:100% 0;-webkit-text-stroke:0px currentColor;">40,001 %</div>
<div class="t" style="right:717.40px;top:288.81px;font-size:10.5px;color:#111;font-weight:700;transform:scaleX(0.8879);transform-origin:100% 0;-webkit-text-stroke:0px currentColor;">35,001 %</div>
<div class="t" style="right:652.40px;top:288.81px;font-size:10.5px;color:#111;font-weight:700;transform:scaleX(0.8879);transform-origin:100% 0;-webkit-text-stroke:0px currentColor;">30,001 %</div>
<div class="t" style="right:586.40px;top:288.81px;font-size:10.5px;color:#111;font-weight:700;transform:scaleX(0.8879);transform-origin:100% 0;-webkit-text-stroke:0px currentColor;">25,001 %</div>
<div class="t" style="right:520.40px;top:288.81px;font-size:10.5px;color:#111;font-weight:700;transform:scaleX(0.8879);transform-origin:100% 0;-webkit-text-stroke:0px currentColor;">20,000 %</div>
<div class="t" style="right:455.40px;top:288.81px;font-size:10.5px;color:#111;font-weight:700;transform:scaleX(0.8879);transform-origin:100% 0;-webkit-text-stroke:0px currentColor;">15,000 %</div>
<div class="t" style="right:389.40px;top:288.81px;font-size:10.5px;color:#111;font-weight:700;transform:scaleX(0.8879);transform-origin:100% 0;-webkit-text-stroke:0px currentColor;">10,000 %</div>
<div class="t" style="right:324.40px;top:288.81px;font-size:10.5px;color:#111;font-weight:700;transform:scaleX(0.8902);transform-origin:100% 0;-webkit-text-stroke:0px currentColor;">7,001 %</div>
<div class="t" style="right:258.40px;top:288.81px;font-size:10.5px;color:#111;font-weight:700;transform:scaleX(0.8902);transform-origin:100% 0;-webkit-text-stroke:0px currentColor;">7,001 %</div>
<div class="t" style="right:193.10px;top:288.81px;font-size:10.5px;color:#111;font-weight:700;transform:scaleX(0.8879);transform-origin:100% 0;-webkit-text-stroke:0px currentColor;">56,862 %</div>
<div class="ab" style="left:256px;top:305px;width:753px;height:23px;background:#ffffff;border-top:1px solid #a0a0a0"></div>
<div class="t" style="left:256.70px;top:311.91px;font-size:10.5px;color:#111;font-weight:700;transform:scaleX(0.8812);transform-origin:0 0;-webkit-text-stroke:0px currentColor;">Artikelaufschlag</div>
<div class="t" style="right:783.40px;top:311.91px;font-size:10.5px;color:#111;font-weight:700;transform:scaleX(0.9003);transform-origin:100% 0;-webkit-text-stroke:0px currentColor;">197,12 €</div>
<div class="t" style="right:717.40px;top:311.91px;font-size:10.5px;color:#111;font-weight:700;transform:scaleX(0.9003);transform-origin:100% 0;-webkit-text-stroke:0px currentColor;">172,48 €</div>
<div class="t" style="right:652.40px;top:311.91px;font-size:10.5px;color:#111;font-weight:700;transform:scaleX(0.9003);transform-origin:100% 0;-webkit-text-stroke:0px currentColor;">147,84 €</div>
<div class="t" style="right:586.40px;top:311.91px;font-size:10.5px;color:#111;font-weight:700;transform:scaleX(0.9003);transform-origin:100% 0;-webkit-text-stroke:0px currentColor;">123,20 €</div>
<div class="t" style="right:520.40px;top:311.91px;font-size:10.5px;color:#111;font-weight:700;transform:scaleX(0.9273);transform-origin:100% 0;-webkit-text-stroke:0px currentColor;">98,56 €</div>
<div class="t" style="right:455.40px;top:311.91px;font-size:10.5px;color:#111;font-weight:700;transform:scaleX(0.9273);transform-origin:100% 0;-webkit-text-stroke:0px currentColor;">73,92 €</div>
<div class="t" style="right:389.40px;top:311.91px;font-size:10.5px;color:#111;font-weight:700;transform:scaleX(0.9273);transform-origin:100% 0;-webkit-text-stroke:0px currentColor;">49,28 €</div>
<div class="t" style="right:324.40px;top:311.91px;font-size:10.5px;color:#111;font-weight:700;transform:scaleX(0.9273);transform-origin:100% 0;-webkit-text-stroke:0px currentColor;">34,50 €</div>
<div class="t" style="right:258.40px;top:311.91px;font-size:10.5px;color:#111;font-weight:700;transform:scaleX(0.9273);transform-origin:100% 0;-webkit-text-stroke:0px currentColor;">34,50 €</div>
<div class="t" style="right:193.10px;top:311.91px;font-size:10.5px;color:#111;font-weight:700;transform:scaleX(0.9003);transform-origin:100% 0;-webkit-text-stroke:0px currentColor;">280,21 €</div>
<div class="ab" style="left:256px;top:328px;width:753px;height:23px;background:#9dc8ec;border-top:1px solid #a0a0a0"></div>
<div class="t" style="left:256.70px;top:335.01px;font-size:10.5px;color:#111;font-weight:700;transform:scaleX(0.8568);transform-origin:0 0;-webkit-text-stroke:0px currentColor;">Artikel VK</div>
<div class="t" style="right:783.40px;top:335.01px;font-size:10.5px;color:#111;font-weight:700;transform:scaleX(0.9003);transform-origin:100% 0;-webkit-text-stroke:0px currentColor;">689,91 €</div>
<div class="t" style="right:717.40px;top:335.01px;font-size:10.5px;color:#111;font-weight:700;transform:scaleX(0.9003);transform-origin:100% 0;-webkit-text-stroke:0px currentColor;">665,27 €</div>
<div class="t" style="right:652.40px;top:335.01px;font-size:10.5px;color:#111;font-weight:700;transform:scaleX(0.9003);transform-origin:100% 0;-webkit-text-stroke:0px currentColor;">640,63 €</div>
<div class="t" style="right:586.40px;top:335.01px;font-size:10.5px;color:#111;font-weight:700;transform:scaleX(0.9003);transform-origin:100% 0;-webkit-text-stroke:0px currentColor;">615,99 €</div>
<div class="t" style="right:520.40px;top:335.01px;font-size:10.5px;color:#111;font-weight:700;transform:scaleX(0.9003);transform-origin:100% 0;-webkit-text-stroke:0px currentColor;">591,35 €</div>
<div class="t" style="right:455.40px;top:335.01px;font-size:10.5px;color:#111;font-weight:700;transform:scaleX(0.9003);transform-origin:100% 0;-webkit-text-stroke:0px currentColor;">566,71 €</div>
<div class="t" style="right:389.40px;top:335.01px;font-size:10.5px;color:#111;font-weight:700;transform:scaleX(0.9003);transform-origin:100% 0;-webkit-text-stroke:0px currentColor;">542,07 €</div>
<div class="t" style="right:324.40px;top:335.01px;font-size:10.5px;color:#111;font-weight:700;transform:scaleX(0.9003);transform-origin:100% 0;-webkit-text-stroke:0px currentColor;">527,29 €</div>
<div class="t" style="right:258.40px;top:335.01px;font-size:10.5px;color:#111;font-weight:700;transform:scaleX(0.9003);transform-origin:100% 0;-webkit-text-stroke:0px currentColor;">527,29 €</div>
<div class="t" style="right:193.10px;top:335.01px;font-size:10.5px;color:#111;font-weight:700;transform:scaleX(0.9003);transform-origin:100% 0;-webkit-text-stroke:0px currentColor;">773,00 €</div>
<div class="ab" style="left:256px;top:351px;width:753px;height:23px;background:#d5e5d1;border-top:1px solid #a0a0a0"></div>
<div class="t" style="left:256.70px;top:358.11px;font-size:10.5px;color:#111;font-weight:700;transform:scaleX(0.8742);transform-origin:0 0;-webkit-text-stroke:0px currentColor;">Lohnaufschlag %</div>
<div class="t" style="right:783.40px;top:358.11px;font-size:10.5px;color:#111;font-weight:700;transform:scaleX(0.8902);transform-origin:100% 0;-webkit-text-stroke:0px currentColor;">0,000 %</div>
<div class="t" style="right:717.40px;top:358.11px;font-size:10.5px;color:#111;font-weight:700;transform:scaleX(0.8902);transform-origin:100% 0;-webkit-text-stroke:0px currentColor;">0,000 %</div>
<div class="t" style="right:652.40px;top:358.11px;font-size:10.5px;color:#111;font-weight:700;transform:scaleX(0.8902);transform-origin:100% 0;-webkit-text-stroke:0px currentColor;">0,000 %</div>
<div class="t" style="right:586.40px;top:358.11px;font-size:10.5px;color:#111;font-weight:700;transform:scaleX(0.8902);transform-origin:100% 0;-webkit-text-stroke:0px currentColor;">0,000 %</div>
<div class="t" style="right:520.40px;top:358.11px;font-size:10.5px;color:#111;font-weight:700;transform:scaleX(0.8902);transform-origin:100% 0;-webkit-text-stroke:0px currentColor;">0,000 %</div>
<div class="t" style="right:455.40px;top:358.11px;font-size:10.5px;color:#111;font-weight:700;transform:scaleX(0.8902);transform-origin:100% 0;-webkit-text-stroke:0px currentColor;">0,000 %</div>
<div class="t" style="right:389.40px;top:358.11px;font-size:10.5px;color:#111;font-weight:700;transform:scaleX(0.8902);transform-origin:100% 0;-webkit-text-stroke:0px currentColor;">0,000 %</div>
<div class="t" style="right:324.40px;top:358.11px;font-size:10.5px;color:#111;font-weight:700;transform:scaleX(0.8902);transform-origin:100% 0;-webkit-text-stroke:0px currentColor;">0,000 %</div>
<div class="t" style="right:258.40px;top:358.11px;font-size:10.5px;color:#111;font-weight:700;transform:scaleX(0.8902);transform-origin:100% 0;-webkit-text-stroke:0px currentColor;">0,000 %</div>
<div class="t" style="right:193.10px;top:358.11px;font-size:10.5px;color:#111;font-weight:700;transform:scaleX(0.8902);transform-origin:100% 0;-webkit-text-stroke:0px currentColor;">0,000 %</div>
<div class="ab" style="left:256px;top:374px;width:753px;height:24px;background:#d5e5d1;border-top:1px solid #a0a0a0"></div>
<div class="t" style="left:256.70px;top:381.21px;font-size:10.5px;color:#111;font-weight:700;transform:scaleX(0.8705);transform-origin:0 0;-webkit-text-stroke:0px currentColor;">Lohnaufschlag</div>
<div class="t" style="right:783.40px;top:381.21px;font-size:10.5px;color:#111;font-weight:700;transform:scaleX(0.9006);transform-origin:100% 0;-webkit-text-stroke:0px currentColor;">0,00 €</div>
<div class="t" style="right:717.40px;top:381.21px;font-size:10.5px;color:#111;font-weight:700;transform:scaleX(0.9006);transform-origin:100% 0;-webkit-text-stroke:0px currentColor;">0,00 €</div>
<div class="t" style="right:652.40px;top:381.21px;font-size:10.5px;color:#111;font-weight:700;transform:scaleX(0.9006);transform-origin:100% 0;-webkit-text-stroke:0px currentColor;">0,00 €</div>
<div class="t" style="right:586.40px;top:381.21px;font-size:10.5px;color:#111;font-weight:700;transform:scaleX(0.9006);transform-origin:100% 0;-webkit-text-stroke:0px currentColor;">0,00 €</div>
<div class="t" style="right:520.40px;top:381.21px;font-size:10.5px;color:#111;font-weight:700;transform:scaleX(0.9006);transform-origin:100% 0;-webkit-text-stroke:0px currentColor;">0,00 €</div>
<div class="t" style="right:455.40px;top:381.21px;font-size:10.5px;color:#111;font-weight:700;transform:scaleX(0.9006);transform-origin:100% 0;-webkit-text-stroke:0px currentColor;">0,00 €</div>
<div class="t" style="right:389.40px;top:381.21px;font-size:10.5px;color:#111;font-weight:700;transform:scaleX(0.9006);transform-origin:100% 0;-webkit-text-stroke:0px currentColor;">0,00 €</div>
<div class="t" style="right:324.40px;top:381.21px;font-size:10.5px;color:#111;font-weight:700;transform:scaleX(0.9006);transform-origin:100% 0;-webkit-text-stroke:0px currentColor;">0,00 €</div>
<div class="t" style="right:258.40px;top:381.21px;font-size:10.5px;color:#111;font-weight:700;transform:scaleX(0.9006);transform-origin:100% 0;-webkit-text-stroke:0px currentColor;">0,00 €</div>
<div class="t" style="right:193.10px;top:381.21px;font-size:10.5px;color:#111;font-weight:700;transform:scaleX(0.9006);transform-origin:100% 0;-webkit-text-stroke:0px currentColor;">0,00 €</div>
<div class="ab" style="left:256px;top:398px;width:753px;height:23px;background:#d5e5d1;border-top:1px solid #a0a0a0"></div>
<div class="t" style="left:256.70px;top:404.31px;font-size:10.5px;color:#111;font-weight:700;transform:scaleX(0.8570);transform-origin:0 0;-webkit-text-stroke:0px currentColor;">Lohn VK</div>
<div class="t" style="right:783.40px;top:404.31px;font-size:10.5px;color:#111;font-weight:700;transform:scaleX(0.9006);transform-origin:100% 0;-webkit-text-stroke:0px currentColor;">0,00 €</div>
<div class="t" style="right:717.40px;top:404.31px;font-size:10.5px;color:#111;font-weight:700;transform:scaleX(0.9006);transform-origin:100% 0;-webkit-text-stroke:0px currentColor;">0,00 €</div>
<div class="t" style="right:652.40px;top:404.31px;font-size:10.5px;color:#111;font-weight:700;transform:scaleX(0.9006);transform-origin:100% 0;-webkit-text-stroke:0px currentColor;">0,00 €</div>
<div class="t" style="right:586.40px;top:404.31px;font-size:10.5px;color:#111;font-weight:700;transform:scaleX(0.9006);transform-origin:100% 0;-webkit-text-stroke:0px currentColor;">0,00 €</div>
<div class="t" style="right:520.40px;top:404.31px;font-size:10.5px;color:#111;font-weight:700;transform:scaleX(0.9006);transform-origin:100% 0;-webkit-text-stroke:0px currentColor;">0,00 €</div>
<div class="t" style="right:455.40px;top:404.31px;font-size:10.5px;color:#111;font-weight:700;transform:scaleX(0.9006);transform-origin:100% 0;-webkit-text-stroke:0px currentColor;">0,00 €</div>
<div class="t" style="right:389.40px;top:404.31px;font-size:10.5px;color:#111;font-weight:700;transform:scaleX(0.9006);transform-origin:100% 0;-webkit-text-stroke:0px currentColor;">0,00 €</div>
<div class="t" style="right:324.40px;top:404.31px;font-size:10.5px;color:#111;font-weight:700;transform:scaleX(0.9006);transform-origin:100% 0;-webkit-text-stroke:0px currentColor;">0,00 €</div>
<div class="t" style="right:258.40px;top:404.31px;font-size:10.5px;color:#111;font-weight:700;transform:scaleX(0.9006);transform-origin:100% 0;-webkit-text-stroke:0px currentColor;">0,00 €</div>
<div class="t" style="right:193.10px;top:404.31px;font-size:10.5px;color:#111;font-weight:700;transform:scaleX(0.9006);transform-origin:100% 0;-webkit-text-stroke:0px currentColor;">0,00 €</div>
<div class="ab" style="left:256px;top:421px;width:753px;height:23px;background:#9dc8ec;border-top:1px solid #a0a0a0"></div>
<div class="t" style="left:256.70px;top:427.41px;font-size:10.5px;color:#111;font-weight:700;transform:scaleX(0.8618);transform-origin:0 0;-webkit-text-stroke:0px currentColor;">Gesamtaufschlag %</div>
<div class="t" style="right:783.40px;top:427.41px;font-size:10.5px;color:#111;font-weight:700;transform:scaleX(0.8879);transform-origin:100% 0;-webkit-text-stroke:0px currentColor;">40,001 %</div>
<div class="t" style="right:717.40px;top:427.41px;font-size:10.5px;color:#111;font-weight:700;transform:scaleX(0.8879);transform-origin:100% 0;-webkit-text-stroke:0px currentColor;">35,001 %</div>
<div class="t" style="right:652.40px;top:427.41px;font-size:10.5px;color:#111;font-weight:700;transform:scaleX(0.8879);transform-origin:100% 0;-webkit-text-stroke:0px currentColor;">30,001 %</div>
<div class="t" style="right:586.40px;top:427.41px;font-size:10.5px;color:#111;font-weight:700;transform:scaleX(0.8879);transform-origin:100% 0;-webkit-text-stroke:0px currentColor;">25,001 %</div>
<div class="t" style="right:520.40px;top:427.41px;font-size:10.5px;color:#111;font-weight:700;transform:scaleX(0.8879);transform-origin:100% 0;-webkit-text-stroke:0px currentColor;">20,000 %</div>
<div class="t" style="right:455.40px;top:427.41px;font-size:10.5px;color:#111;font-weight:700;transform:scaleX(0.8879);transform-origin:100% 0;-webkit-text-stroke:0px currentColor;">15,000 %</div>
<div class="t" style="right:389.40px;top:427.41px;font-size:10.5px;color:#111;font-weight:700;transform:scaleX(0.8879);transform-origin:100% 0;-webkit-text-stroke:0px currentColor;">10,000 %</div>
<div class="t" style="right:324.40px;top:427.41px;font-size:10.5px;color:#111;font-weight:700;transform:scaleX(0.8902);transform-origin:100% 0;-webkit-text-stroke:0px currentColor;">7,001 %</div>
<div class="t" style="right:258.40px;top:427.41px;font-size:10.5px;color:#111;font-weight:700;transform:scaleX(0.8902);transform-origin:100% 0;-webkit-text-stroke:0px currentColor;">7,001 %</div>
<div class="t" style="right:193.10px;top:427.41px;font-size:10.5px;color:#111;font-weight:700;transform:scaleX(0.8879);transform-origin:100% 0;-webkit-text-stroke:0px currentColor;">56,862 %</div>
<div class="ab" style="left:256px;top:444px;width:753px;height:23px;background:#ffffff;border-top:1px solid #a0a0a0"></div>
<div class="t" style="left:256.70px;top:450.51px;font-size:10.5px;color:#111;font-weight:700;transform:scaleX(0.8624);transform-origin:0 0;-webkit-text-stroke:0px currentColor;">Gesamtaufschlag</div>
<div class="t" style="right:783.40px;top:450.51px;font-size:10.5px;color:#111;font-weight:700;transform:scaleX(0.9003);transform-origin:100% 0;-webkit-text-stroke:0px currentColor;">197,12 €</div>
<div class="t" style="right:717.40px;top:450.51px;font-size:10.5px;color:#111;font-weight:700;transform:scaleX(0.9003);transform-origin:100% 0;-webkit-text-stroke:0px currentColor;">172,48 €</div>
<div class="t" style="right:652.40px;top:450.51px;font-size:10.5px;color:#111;font-weight:700;transform:scaleX(0.9003);transform-origin:100% 0;-webkit-text-stroke:0px currentColor;">147,84 €</div>
<div class="t" style="right:586.40px;top:450.51px;font-size:10.5px;color:#111;font-weight:700;transform:scaleX(0.9003);transform-origin:100% 0;-webkit-text-stroke:0px currentColor;">123,20 €</div>
<div class="t" style="right:520.40px;top:450.51px;font-size:10.5px;color:#111;font-weight:700;transform:scaleX(0.9273);transform-origin:100% 0;-webkit-text-stroke:0px currentColor;">98,56 €</div>
<div class="t" style="right:455.40px;top:450.51px;font-size:10.5px;color:#111;font-weight:700;transform:scaleX(0.9273);transform-origin:100% 0;-webkit-text-stroke:0px currentColor;">73,92 €</div>
<div class="t" style="right:389.40px;top:450.51px;font-size:10.5px;color:#111;font-weight:700;transform:scaleX(0.9273);transform-origin:100% 0;-webkit-text-stroke:0px currentColor;">49,28 €</div>
<div class="t" style="right:324.40px;top:450.51px;font-size:10.5px;color:#111;font-weight:700;transform:scaleX(0.9273);transform-origin:100% 0;-webkit-text-stroke:0px currentColor;">34,50 €</div>
<div class="t" style="right:258.40px;top:450.51px;font-size:10.5px;color:#111;font-weight:700;transform:scaleX(0.9273);transform-origin:100% 0;-webkit-text-stroke:0px currentColor;">34,50 €</div>
<div class="t" style="right:193.10px;top:450.51px;font-size:10.5px;color:#111;font-weight:700;transform:scaleX(0.9003);transform-origin:100% 0;-webkit-text-stroke:0px currentColor;">280,21 €</div>
<div class="ab" style="left:256px;top:467px;width:753px;height:23px;background:#9dc8ec;border-top:1px solid #a0a0a0"></div>
<div class="t" style="left:256.70px;top:473.61px;font-size:10.5px;color:#111;font-weight:700;transform:scaleX(0.8388);transform-origin:0 0;-webkit-text-stroke:0px currentColor;">Gesamt VK</div>
<div class="t" style="right:783.40px;top:473.61px;font-size:10.5px;color:#111;font-weight:700;transform:scaleX(0.9003);transform-origin:100% 0;-webkit-text-stroke:0px currentColor;">689,91 €</div>
<div class="t" style="right:717.40px;top:473.61px;font-size:10.5px;color:#111;font-weight:700;transform:scaleX(0.9003);transform-origin:100% 0;-webkit-text-stroke:0px currentColor;">665,27 €</div>
<div class="t" style="right:652.40px;top:473.61px;font-size:10.5px;color:#111;font-weight:700;transform:scaleX(0.9003);transform-origin:100% 0;-webkit-text-stroke:0px currentColor;">640,63 €</div>
<div class="t" style="right:586.40px;top:473.61px;font-size:10.5px;color:#111;font-weight:700;transform:scaleX(0.9003);transform-origin:100% 0;-webkit-text-stroke:0px currentColor;">615,99 €</div>
<div class="t" style="right:520.40px;top:473.61px;font-size:10.5px;color:#111;font-weight:700;transform:scaleX(0.9003);transform-origin:100% 0;-webkit-text-stroke:0px currentColor;">591,35 €</div>
<div class="t" style="right:455.40px;top:473.61px;font-size:10.5px;color:#111;font-weight:700;transform:scaleX(0.9003);transform-origin:100% 0;-webkit-text-stroke:0px currentColor;">566,71 €</div>
<div class="t" style="right:389.40px;top:473.61px;font-size:10.5px;color:#111;font-weight:700;transform:scaleX(0.9003);transform-origin:100% 0;-webkit-text-stroke:0px currentColor;">542,07 €</div>
<div class="t" style="right:324.40px;top:473.61px;font-size:10.5px;color:#111;font-weight:700;transform:scaleX(0.9003);transform-origin:100% 0;-webkit-text-stroke:0px currentColor;">527,29 €</div>
<div class="t" style="right:258.40px;top:473.61px;font-size:10.5px;color:#111;font-weight:700;transform:scaleX(0.9003);transform-origin:100% 0;-webkit-text-stroke:0px currentColor;">527,29 €</div>
<div class="t" style="right:193.10px;top:473.61px;font-size:10.5px;color:#111;font-weight:700;transform:scaleX(0.9003);transform-origin:100% 0;-webkit-text-stroke:0px currentColor;">773,00 €</div>
<div class="ab" style="left:256px;top:490px;width:753px;height:1px;background:#a0a0a0"></div>
<div class="ab" style="left:353px;top:260px;width:1px;height:230px;background:#a0a0a0"></div>
<div class="ab" style="left:418px;top:260px;width:1px;height:230px;background:#a0a0a0"></div>
<div class="ab" style="left:484px;top:260px;width:1px;height:230px;background:#a0a0a0"></div>
<div class="ab" style="left:549px;top:260px;width:1px;height:230px;background:#a0a0a0"></div>
<div class="ab" style="left:615px;top:260px;width:1px;height:230px;background:#a0a0a0"></div>
<div class="ab" style="left:681px;top:260px;width:1px;height:230px;background:#a0a0a0"></div>
<div class="ab" style="left:746px;top:260px;width:1px;height:230px;background:#a0a0a0"></div>
<div class="ab" style="left:812px;top:260px;width:1px;height:230px;background:#a0a0a0"></div>
<div class="ab" style="left:877px;top:260px;width:1px;height:230px;background:#a0a0a0"></div>
<div class="ab" style="left:943px;top:260px;width:1px;height:230px;background:#a0a0a0"></div>
<div class="ab" style="left:607.0px;top:551.5px;width:2px;height:2px;border-radius:1px;background:#333"></div>
<div class="ab" style="left:610.3px;top:551.5px;width:2px;height:2px;border-radius:1px;background:#333"></div>
<div class="ab" style="left:613.6px;top:551.5px;width:2px;height:2px;border-radius:1px;background:#333"></div>
<div class="ab" style="left:616.9px;top:551.5px;width:2px;height:2px;border-radius:1px;background:#333"></div>
<div class="ab" style="left:620.2px;top:551.5px;width:2px;height:2px;border-radius:1px;background:#333"></div>
<div class="t" style="left:48.15px;top:567.79px;font-size:11px;color:#1a1a1a;transform:scaleX(0.9198);transform-origin:0 0;">Suche</div>
<div class="ab" style="left:82px;top:565px;width:196px;height:18px;background:#fff;border:1px solid #a0a0a0"></div>
<div class="t" style="left:83.15px;top:567.79px;font-size:11px;color:#1a1a1a;transform:scaleX(0.9950);transform-origin:0 0;">grohe</div>
<div class="ab" style="left:208px;top:566px;width:17px;height:16px;background:#dcdcdc;border-left:1px solid #b0b0b0"></div>
<div class="ab" style="left:225px;top:566px;width:17px;height:16px;background:#dcdcdc;border-left:1px solid #b0b0b0"></div>
<div class="ab" style="left:242px;top:566px;width:17px;height:16px;background:#dcdcdc;border-left:1px solid #b0b0b0"></div>
<div class="ab" style="left:259px;top:566px;width:17px;height:16px;background:#dcdcdc;border-left:1px solid #b0b0b0"></div>
<svg style="left:211px;top:567px" width="12" height="12"><circle cx="4.5" cy="4.5" r="3.3" fill="none" stroke="#555" stroke-width="1.3"/><path d="M7 7 L10.5 10.5" stroke="#0a6fcf" stroke-width="2"/></svg>
<svg style="left:229px;top:567px" width="10" height="13"><rect x="1" y="1" width="8" height="2" fill="#666"/><rect x="2.5" y="3" width="5" height="9" fill="#777"/><path d="M4 4V11M6 4V11" stroke="#ccc" stroke-width="0.8"/></svg>
<svg style="left:245px;top:567px" width="12" height="12"><circle cx="5.5" cy="5.5" r="5" fill="#666"/><path d="M3 3 Q6 4 5 7 Q7 8 8 10" stroke="#bbb" fill="none"/><path d="M7 6 L11 10" stroke="#0a6fcf" stroke-width="2"/></svg>
<svg style="left:262px;top:567px" width="12" height="12"><rect x="0.5" y="0.5" width="10" height="10" fill="none" stroke="#888" stroke-dasharray="1.5 1"/><circle cx="5" cy="5" r="2.5" fill="none" stroke="#0a6fcf" stroke-width="1.2"/><path d="M6.5 6.5 L9 9" stroke="#0a6fcf" stroke-width="1.4"/></svg>
<div class="t" style="left:283.70px;top:567.79px;font-size:11px;color:#1a1a1a;transform:scaleX(0.9464);transform-origin:0 0;">Suchfilter</div>
<div class="ab" style="left:333px;top:565px;width:153px;height:18px;background:#fff;border:1px solid #a0a0a0"></div>
<div class="t" style="left:334.40px;top:567.79px;font-size:11px;color:#1a1a1a;transform:scaleX(0.9341);transform-origin:0 0;">Kurztext</div>
<div class="ab" style="left:470px;top:566px;width:15px;height:16px;background:#dcdcdc;border-left:1px solid #a0a0a0"></div>
<svg style="left:473px;top:570px" width="9" height="7"><path d="M1 1.5 L4.5 5 L8 1.5" stroke="#333" stroke-width="1.6" fill="none"/></svg>
<div class="ab" style="left:49px;top:589px;width:1133px;height:240px;background:#fff;border:2px solid #a0a0a0;border-right:1px solid #a0a0a0"></div>
<div class="ab" style="left:51px;top:591px;width:1115px;height:17px;background:#ebebeb;border-bottom:1px solid #a0a0a0"></div>
<div class="t" style="left:61.10px;top:593.59px;font-size:11px;color:#1a1a1a;transform:scaleX(0.9454);transform-origin:0 0;">Lief. Name</div>
<div class="t" style="left:163.10px;top:593.59px;font-size:11px;color:#1a1a1a;transform:scaleX(0.9690);transform-origin:0 0;">Lief</div>
<div class="t" style="left:223.10px;top:593.59px;font-size:11px;color:#1a1a1a;">Artikel-Nr</div>
<div class="t" style="left:309.10px;top:593.59px;font-size:11px;color:#1a1a1a;transform:scaleX(0.9612);transform-origin:0 0;">Suchbegriff</div>
<div class="t" style="left:496.10px;top:593.59px;font-size:11px;color:#1a1a1a;transform:scaleX(0.9341);transform-origin:0 0;">Kurztext</div>
<div class="t" style="left:710.10px;top:593.59px;font-size:11px;color:#1a1a1a;transform:scaleX(0.9091);transform-origin:0 0;">ME</div>
<div class="t" style="left:740.10px;top:593.59px;font-size:11px;color:#1a1a1a;transform:scaleX(0.9210);transform-origin:0 0;">Listenpreis</div>
<div class="t" style="left:826.10px;top:593.59px;font-size:11px;color:#1a1a1a;transform:scaleX(0.9047);transform-origin:0 0;">Einkaufspreis</div>
<div class="t" style="left:911.10px;top:593.59px;font-size:11px;color:#1a1a1a;transform:scaleX(0.8749);transform-origin:0 0;">VK-Preis 1</div>
<div class="t" style="left:997.10px;top:593.59px;font-size:11px;color:#1a1a1a;transform:scaleX(0.8749);transform-origin:0 0;">VK-Preis 2</div>
<div class="t" style="left:1083.10px;top:593.59px;font-size:11px;color:#1a1a1a;transform:scaleX(0.8749);transform-origin:0 0;">VK-Preis 3</div>
<div class="ab" style="left:59px;top:591px;width:1px;height:17px;background:#b8b8b8"></div>
<svg style="left:481px;top:596px" width="9" height="5"><path d="M0 5 L4.5 0.5 L9 5Z" fill="#222"/></svg>
<div class="ab" style="left:60px;top:608px;width:1106px;height:21px;background:#9dc8ec"></div>
<div class="ab" style="left:51px;top:608px;width:9px;height:21px;background:#ebebeb;border-bottom:1px solid #a0a0a0;border-right:1px solid #a0a0a0"></div>
<div class="t" style="left:61.10px;top:614.09px;font-size:11px;color:#111;transform:scaleX(0.8200);transform-origin:0 0;-webkit-text-stroke:0.5px currentColor;">GIENGER</div>
<div class="t" style="left:163.70px;top:614.09px;font-size:11px;color:#111;transform:scaleX(0.9096);transform-origin:0 0;-webkit-text-stroke:0.5px currentColor;">064</div>
<div class="t" style="left:223.70px;top:614.09px;font-size:11px;color:#111;transform:scaleX(0.8636);transform-origin:0 0;-webkit-text-stroke:0.5px currentColor;">ZUGKV32</div>
<div class="t" style="left:309.40px;top:614.09px;font-size:11px;color:#111;transform:scaleX(0.8882);transform-origin:0 0;-webkit-text-stroke:0.5px currentColor;">ABLGARN</div>
<div class="t" style="left:496.70px;top:612.09px;font-size:11px;color:#111;transform:scaleX(0.9525);transform-origin:0 0;-webkit-text-stroke:0.5px currentColor;">Zugstangen-Ablaufgarnitur 1 1/4"&nbsp; verchromt</div>
<div class="t" style="left:711.10px;top:614.09px;font-size:11px;color:#111;transform:scaleX(0.8249);transform-origin:0 0;-webkit-text-stroke:0.5px currentColor;">ST</div>
<div class="t" style="right:376.70px;top:614.09px;font-size:11px;color:#111;transform:scaleX(0.8600);transform-origin:100% 0;-webkit-text-stroke:0.5px currentColor;">257,00 €</div>
<div class="t" style="right:291.70px;top:614.09px;font-size:11px;color:#111;transform:scaleX(0.8600);transform-origin:100% 0;-webkit-text-stroke:0.5px currentColor;">179,90 €</div>
<div class="t" style="right:205.70px;top:614.09px;font-size:11px;color:#111;transform:scaleX(0.8600);transform-origin:100% 0;-webkit-text-stroke:0.5px currentColor;">251,86 €</div>
<div class="t" style="right:119.70px;top:614.09px;font-size:11px;color:#111;transform:scaleX(0.8600);transform-origin:100% 0;-webkit-text-stroke:0.5px currentColor;">242,87 €</div>
<div class="t" style="right:31.40px;top:614.09px;font-size:11px;color:#111;transform:scaleX(0.8600);transform-origin:100% 0;-webkit-text-stroke:0.5px currentColor;">233,87 €</div>
<div class="ab" style="left:60px;top:629px;width:1106px;height:22px;background:#ffffff"></div>
<div class="ab" style="left:51px;top:629px;width:9px;height:22px;background:#ebebeb;border-bottom:1px solid #a0a0a0;border-right:1px solid #a0a0a0"></div>
<div class="t" style="left:61.10px;top:635.54px;font-size:11px;color:#111;transform:scaleX(0.8200);transform-origin:0 0;-webkit-text-stroke:0.5px currentColor;">GIENGER</div>
<div class="t" style="left:163.70px;top:635.54px;font-size:11px;color:#111;transform:scaleX(0.9096);transform-origin:0 0;-webkit-text-stroke:0.5px currentColor;">064</div>
<div class="t" style="left:223.70px;top:635.54px;font-size:11px;color:#111;transform:scaleX(0.8897);transform-origin:0 0;-webkit-text-stroke:0.5px currentColor;">ALLUUPWT</div>
<div class="t" style="left:309.40px;top:635.54px;font-size:11px;color:#111;transform:scaleX(0.8532);transform-origin:0 0;-webkit-text-stroke:0.5px currentColor;">ALLCURE</div>
<div class="t" style="left:496.70px;top:633.54px;font-size:11px;color:#111;transform:scaleX(0.9308);transform-origin:0 0;-webkit-text-stroke:0.5px currentColor;">UP-Einbaukörper Allure</div>
<div class="t" style="left:711.10px;top:635.54px;font-size:11px;color:#111;transform:scaleX(0.8249);transform-origin:0 0;-webkit-text-stroke:0.5px currentColor;">ST</div>
<div class="t" style="right:376.70px;top:635.54px;font-size:11px;color:#111;transform:scaleX(0.8600);transform-origin:100% 0;-webkit-text-stroke:0.5px currentColor;">353,00 €</div>
<div class="t" style="right:291.70px;top:635.54px;font-size:11px;color:#111;transform:scaleX(0.8600);transform-origin:100% 0;-webkit-text-stroke:0.5px currentColor;">198,56 €</div>
<div class="t" style="right:205.70px;top:635.54px;font-size:11px;color:#111;transform:scaleX(0.8600);transform-origin:100% 0;-webkit-text-stroke:0.5px currentColor;">277,98 €</div>
<div class="t" style="right:119.70px;top:635.54px;font-size:11px;color:#111;transform:scaleX(0.8600);transform-origin:100% 0;-webkit-text-stroke:0.5px currentColor;">268,06 €</div>
<div class="t" style="right:31.40px;top:635.54px;font-size:11px;color:#111;transform:scaleX(0.8600);transform-origin:100% 0;-webkit-text-stroke:0.5px currentColor;">258,13 €</div>
<div class="ab" style="left:60px;top:651px;width:1106px;height:21px;background:#9dc8ec"></div>
<div class="ab" style="left:51px;top:651px;width:9px;height:21px;background:#ebebeb;border-bottom:1px solid #a0a0a0;border-right:1px solid #a0a0a0"></div>
<div class="t" style="left:61.10px;top:656.99px;font-size:11px;color:#111;transform:scaleX(0.8200);transform-origin:0 0;-webkit-text-stroke:0.5px currentColor;">GIENGER</div>
<div class="t" style="left:163.70px;top:656.99px;font-size:11px;color:#111;transform:scaleX(0.9096);transform-origin:0 0;-webkit-text-stroke:0.5px currentColor;">064</div>
<div class="t" style="left:223.70px;top:656.99px;font-size:11px;color:#111;transform:scaleX(0.9107);transform-origin:0 0;-webkit-text-stroke:0.5px currentColor;">ALLUU</div>
<div class="t" style="left:309.40px;top:656.99px;font-size:11px;color:#111;transform:scaleX(0.8412);transform-origin:0 0;-webkit-text-stroke:0.5px currentColor;">ALLURE</div>
<div class="t" style="left:496.70px;top:654.99px;font-size:11px;color:#111;transform:scaleX(0.9364);transform-origin:0 0;-webkit-text-stroke:0.5px currentColor;">Einhand-Waschtischbatterie Allure</div>
<div class="t" style="left:711.10px;top:656.99px;font-size:11px;color:#111;transform:scaleX(0.8249);transform-origin:0 0;-webkit-text-stroke:0.5px currentColor;">ST</div>
<div class="t" style="right:376.70px;top:656.99px;font-size:11px;color:#111;transform:scaleX(0.8600);transform-origin:100% 0;-webkit-text-stroke:0.5px currentColor;">679,00 €</div>
<div class="t" style="right:291.70px;top:656.99px;font-size:11px;color:#111;transform:scaleX(0.8600);transform-origin:100% 0;-webkit-text-stroke:0.5px currentColor;">432,86 €</div>
<div class="t" style="right:205.70px;top:656.99px;font-size:11px;color:#111;transform:scaleX(0.8600);transform-origin:100% 0;-webkit-text-stroke:0.5px currentColor;">606,00 €</div>
<div class="t" style="right:119.70px;top:656.99px;font-size:11px;color:#111;transform:scaleX(0.8600);transform-origin:100% 0;-webkit-text-stroke:0.5px currentColor;">584,36 €</div>
<div class="t" style="right:31.40px;top:656.99px;font-size:11px;color:#111;transform:scaleX(0.8600);transform-origin:100% 0;-webkit-text-stroke:0.5px currentColor;">562,72 €</div>
<div class="ab" style="left:60px;top:672px;width:1106px;height:22px;background:#ffffff"></div>
<div class="ab" style="left:51px;top:672px;width:9px;height:22px;background:#ebebeb;border-bottom:1px solid #a0a0a0;border-right:1px solid #a0a0a0"></div>
<div class="t" style="left:61.10px;top:678.44px;font-size:11px;color:#111;transform:scaleX(0.8200);transform-origin:0 0;-webkit-text-stroke:0.5px currentColor;">GIENGER</div>
<div class="t" style="left:163.70px;top:678.44px;font-size:11px;color:#111;transform:scaleX(0.9096);transform-origin:0 0;-webkit-text-stroke:0.5px currentColor;">064</div>
<div class="t" style="left:223.70px;top:678.44px;font-size:11px;color:#111;transform:scaleX(0.8901);transform-origin:0 0;-webkit-text-stroke:0.5px currentColor;">ALLUFWT</div>
<div class="t" style="left:309.40px;top:678.44px;font-size:11px;color:#111;transform:scaleX(0.8412);transform-origin:0 0;-webkit-text-stroke:0.5px currentColor;">ALLURE</div>
<div class="t" style="left:496.70px;top:676.44px;font-size:11px;color:#111;transform:scaleX(0.9347);transform-origin:0 0;-webkit-text-stroke:0.5px currentColor;">Farbset Allure verchromt</div>
<div class="t" style="left:711.10px;top:678.44px;font-size:11px;color:#111;transform:scaleX(0.8249);transform-origin:0 0;-webkit-text-stroke:0.5px currentColor;">ST</div>
<div class="t" style="right:376.70px;top:678.44px;font-size:11px;color:#111;transform:scaleX(0.8600);transform-origin:100% 0;-webkit-text-stroke:0.5px currentColor;">962,00 €</div>
<div class="t" style="right:291.70px;top:678.44px;font-size:11px;color:#111;transform:scaleX(0.8600);transform-origin:100% 0;-webkit-text-stroke:0.5px currentColor;">613,28 €</div>
<div class="t" style="right:205.70px;top:678.44px;font-size:11px;color:#111;transform:scaleX(0.8600);transform-origin:100% 0;-webkit-text-stroke:0.5px currentColor;">858,59 €</div>
<div class="t" style="right:119.70px;top:678.44px;font-size:11px;color:#111;transform:scaleX(0.8600);transform-origin:100% 0;-webkit-text-stroke:0.5px currentColor;">827,93 €</div>
<div class="t" style="right:31.40px;top:678.44px;font-size:11px;color:#111;transform:scaleX(0.8600);transform-origin:100% 0;-webkit-text-stroke:0.5px currentColor;">797,26 €</div>
<div class="ab" style="left:60px;top:694px;width:1106px;height:21px;background:#9dc8ec"></div>
<div class="ab" style="left:51px;top:694px;width:9px;height:21px;background:#ebebeb;border-bottom:1px solid #a0a0a0;border-right:1px solid #a0a0a0"></div>
<div class="t" style="left:61.10px;top:699.89px;font-size:11px;color:#111;transform:scaleX(0.8200);transform-origin:0 0;-webkit-text-stroke:0.5px currentColor;">GIENGER</div>
<div class="t" style="left:163.70px;top:699.89px;font-size:11px;color:#111;transform:scaleX(0.9096);transform-origin:0 0;-webkit-text-stroke:0.5px currentColor;">064</div>
<div class="t" style="left:223.70px;top:699.89px;font-size:11px;color:#111;transform:scaleX(0.8708);transform-origin:0 0;-webkit-text-stroke:0.5px currentColor;">ALLUFWT220</div>
<div class="t" style="left:309.40px;top:699.89px;font-size:11px;color:#111;transform:scaleX(0.8412);transform-origin:0 0;-webkit-text-stroke:0.5px currentColor;">ALLURE</div>
<div class="t" style="left:496.70px;top:697.89px;font-size:11px;color:#111;transform:scaleX(0.9296);transform-origin:0 0;-webkit-text-stroke:0.5px currentColor;">Farbset Allure verchromt Ausl.220mm</div>
<div class="t" style="left:711.10px;top:699.89px;font-size:11px;color:#111;transform:scaleX(0.8249);transform-origin:0 0;-webkit-text-stroke:0.5px currentColor;">ST</div>
<div class="t" style="right:376.70px;top:699.89px;font-size:11px;color:#111;transform:scaleX(0.8600);transform-origin:100% 0;-webkit-text-stroke:0.5px currentColor;">1.010,00 €</div>
<div class="t" style="right:291.70px;top:699.89px;font-size:11px;color:#111;transform:scaleX(0.8600);transform-origin:100% 0;-webkit-text-stroke:0.5px currentColor;">643,88 €</div>
<div class="t" style="right:205.70px;top:699.89px;font-size:11px;color:#111;transform:scaleX(0.8600);transform-origin:100% 0;-webkit-text-stroke:0.5px currentColor;">901,43 €</div>
<div class="t" style="right:119.70px;top:699.89px;font-size:11px;color:#111;transform:scaleX(0.8600);transform-origin:100% 0;-webkit-text-stroke:0.5px currentColor;">869,24 €</div>
<div class="t" style="right:31.40px;top:699.89px;font-size:11px;color:#111;transform:scaleX(0.8600);transform-origin:100% 0;-webkit-text-stroke:0.5px currentColor;">837,04 €</div>
<div class="ab" style="left:60px;top:715px;width:1106px;height:22px;background:#6590cc"></div>
<div class="ab" style="left:51px;top:715px;width:9px;height:22px;background:#ebebeb;border-bottom:1px solid #a0a0a0;border-right:1px solid #a0a0a0"></div>
<div class="t" style="left:61.10px;top:721.34px;font-size:11px;color:#111;transform:scaleX(0.8200);transform-origin:0 0;-webkit-text-stroke:0.5px currentColor;">GIENGER</div>
<div class="t" style="left:163.70px;top:721.34px;font-size:11px;color:#111;transform:scaleX(0.9096);transform-origin:0 0;-webkit-text-stroke:0.5px currentColor;">064</div>
<div class="t" style="left:223.70px;top:721.34px;font-size:11px;color:#111;transform:scaleX(0.8872);transform-origin:0 0;-webkit-text-stroke:0.5px currentColor;">ALLU242</div>
<div class="t" style="left:309.40px;top:721.34px;font-size:11px;color:#111;transform:scaleX(0.8412);transform-origin:0 0;-webkit-text-stroke:0.5px currentColor;">ALLURE</div>
<div class="t" style="left:496.70px;top:719.34px;font-size:11px;color:#111;transform:scaleX(0.9364);transform-origin:0 0;-webkit-text-stroke:0.5px currentColor;">Einhand-Waschtischbatterie Allure</div>
<div class="t" style="left:711.10px;top:721.34px;font-size:11px;color:#111;transform:scaleX(0.8249);transform-origin:0 0;-webkit-text-stroke:0.5px currentColor;">ST</div>
<div class="t" style="right:376.70px;top:721.34px;font-size:11px;color:#111;transform:scaleX(0.8600);transform-origin:100% 0;-webkit-text-stroke:0.5px currentColor;">773,00 €</div>
<div class="t" style="right:291.70px;top:721.34px;font-size:11px;color:#111;transform:scaleX(0.8600);transform-origin:100% 0;-webkit-text-stroke:0.5px currentColor;">492,79 €</div>
<div class="t" style="right:205.70px;top:721.34px;font-size:11px;color:#111;transform:scaleX(0.8600);transform-origin:100% 0;-webkit-text-stroke:0.5px currentColor;">689,91 €</div>
<div class="t" style="right:119.70px;top:721.34px;font-size:11px;color:#111;transform:scaleX(0.8600);transform-origin:100% 0;-webkit-text-stroke:0.5px currentColor;">665,27 €</div>
<div class="t" style="right:31.40px;top:721.34px;font-size:11px;color:#111;transform:scaleX(0.8600);transform-origin:100% 0;-webkit-text-stroke:0.5px currentColor;">640,63 €</div>
<div class="ab" style="left:60px;top:737px;width:1106px;height:21px;background:#9dc8ec"></div>
<div class="ab" style="left:51px;top:737px;width:9px;height:21px;background:#ebebeb;border-bottom:1px solid #a0a0a0;border-right:1px solid #a0a0a0"></div>
<div class="t" style="left:61.10px;top:742.79px;font-size:11px;color:#111;transform:scaleX(0.8200);transform-origin:0 0;-webkit-text-stroke:0.5px currentColor;">GIENGER</div>
<div class="t" style="left:163.70px;top:742.79px;font-size:11px;color:#111;transform:scaleX(0.9096);transform-origin:0 0;-webkit-text-stroke:0.5px currentColor;">064</div>
<div class="t" style="left:223.70px;top:742.79px;font-size:11px;color:#111;transform:scaleX(0.8424);transform-origin:0 0;-webkit-text-stroke:0.5px currentColor;">ALLUEJ</div>
<div class="t" style="left:309.40px;top:742.79px;font-size:11px;color:#111;transform:scaleX(0.8412);transform-origin:0 0;-webkit-text-stroke:0.5px currentColor;">ALLURE</div>
<div class="t" style="left:496.70px;top:740.79px;font-size:11px;color:#111;transform:scaleX(0.9222);transform-origin:0 0;-webkit-text-stroke:0.5px currentColor;">Einhand-Waschtischbatterie Allure EcoJoy</div>
<div class="t" style="left:711.10px;top:742.79px;font-size:11px;color:#111;transform:scaleX(0.8249);transform-origin:0 0;-webkit-text-stroke:0.5px currentColor;">ST</div>
<div class="t" style="right:376.70px;top:742.79px;font-size:11px;color:#111;transform:scaleX(0.8600);transform-origin:100% 0;-webkit-text-stroke:0.5px currentColor;">490,00 €</div>
<div class="t" style="right:291.70px;top:742.79px;font-size:11px;color:#111;transform:scaleX(0.8600);transform-origin:100% 0;-webkit-text-stroke:0.5px currentColor;">312,38 €</div>
<div class="t" style="right:205.70px;top:742.79px;font-size:11px;color:#111;transform:scaleX(0.8600);transform-origin:100% 0;-webkit-text-stroke:0.5px currentColor;">437,33 €</div>
<div class="t" style="right:119.70px;top:742.79px;font-size:11px;color:#111;transform:scaleX(0.8600);transform-origin:100% 0;-webkit-text-stroke:0.5px currentColor;">421,71 €</div>
<div class="t" style="right:31.40px;top:742.79px;font-size:11px;color:#111;transform:scaleX(0.8600);transform-origin:100% 0;-webkit-text-stroke:0.5px currentColor;">406,09 €</div>
<div class="ab" style="left:60px;top:758px;width:1106px;height:22px;background:#ffffff"></div>
<div class="ab" style="left:51px;top:758px;width:9px;height:22px;background:#ebebeb;border-bottom:1px solid #a0a0a0;border-right:1px solid #a0a0a0"></div>
<div class="t" style="left:61.10px;top:764.24px;font-size:11px;color:#111;transform:scaleX(0.8200);transform-origin:0 0;-webkit-text-stroke:0.5px currentColor;">GIENGER</div>
<div class="t" style="left:163.70px;top:764.24px;font-size:11px;color:#111;transform:scaleX(0.9096);transform-origin:0 0;-webkit-text-stroke:0.5px currentColor;">064</div>
<div class="t" style="left:223.70px;top:764.24px;font-size:11px;color:#111;transform:scaleX(0.8427);transform-origin:0 0;-webkit-text-stroke:0.5px currentColor;">ALLUEJU</div>
<div class="t" style="left:309.40px;top:764.24px;font-size:11px;color:#111;transform:scaleX(0.8412);transform-origin:0 0;-webkit-text-stroke:0.5px currentColor;">ALLURE</div>
<div class="t" style="left:496.70px;top:762.24px;font-size:11px;color:#111;transform:scaleX(0.9222);transform-origin:0 0;-webkit-text-stroke:0.5px currentColor;">Einhand-Waschtischbatterie Allure EcoJoy</div>
<div class="t" style="left:711.10px;top:764.24px;font-size:11px;color:#111;transform:scaleX(0.8249);transform-origin:0 0;-webkit-text-stroke:0.5px currentColor;">ST</div>
<div class="t" style="right:376.70px;top:764.24px;font-size:11px;color:#111;transform:scaleX(0.8600);transform-origin:100% 0;-webkit-text-stroke:0.5px currentColor;">679,00 €</div>
<div class="t" style="right:291.70px;top:764.24px;font-size:11px;color:#111;transform:scaleX(0.8600);transform-origin:100% 0;-webkit-text-stroke:0.5px currentColor;">432,86 €</div>
<div class="t" style="right:205.70px;top:764.24px;font-size:11px;color:#111;transform:scaleX(0.8600);transform-origin:100% 0;-webkit-text-stroke:0.5px currentColor;">606,00 €</div>
<div class="t" style="right:119.70px;top:764.24px;font-size:11px;color:#111;transform:scaleX(0.8600);transform-origin:100% 0;-webkit-text-stroke:0.5px currentColor;">584,36 €</div>
<div class="t" style="right:31.40px;top:764.24px;font-size:11px;color:#111;transform:scaleX(0.8600);transform-origin:100% 0;-webkit-text-stroke:0.5px currentColor;">562,72 €</div>
<div class="ab" style="left:60px;top:780px;width:1106px;height:21px;background:#9dc8ec"></div>
<div class="ab" style="left:51px;top:780px;width:9px;height:21px;background:#ebebeb;border-bottom:1px solid #a0a0a0;border-right:1px solid #a0a0a0"></div>
<div class="t" style="left:61.10px;top:785.69px;font-size:11px;color:#111;transform:scaleX(0.8200);transform-origin:0 0;-webkit-text-stroke:0.5px currentColor;">GIENGER</div>
<div class="t" style="left:163.70px;top:785.69px;font-size:11px;color:#111;transform:scaleX(0.9096);transform-origin:0 0;-webkit-text-stroke:0.5px currentColor;">064</div>
<div class="t" style="left:223.70px;top:785.69px;font-size:11px;color:#111;transform:scaleX(0.8949);transform-origin:0 0;-webkit-text-stroke:0.5px currentColor;">ALLUBD</div>
<div class="t" style="left:309.40px;top:785.69px;font-size:11px;color:#111;transform:scaleX(0.8412);transform-origin:0 0;-webkit-text-stroke:0.5px currentColor;">ALLURE</div>
<div class="t" style="left:496.70px;top:783.69px;font-size:11px;color:#111;transform:scaleX(0.9415);transform-origin:0 0;-webkit-text-stroke:0.5px currentColor;">Einhand-Bidetbatterie Allure</div>
<div class="t" style="left:711.10px;top:785.69px;font-size:11px;color:#111;transform:scaleX(0.8249);transform-origin:0 0;-webkit-text-stroke:0.5px currentColor;">ST</div>
<div class="t" style="right:376.70px;top:785.69px;font-size:11px;color:#111;transform:scaleX(0.8600);transform-origin:100% 0;-webkit-text-stroke:0.5px currentColor;">1.022,00 €</div>
<div class="t" style="right:291.70px;top:785.69px;font-size:11px;color:#111;transform:scaleX(0.8600);transform-origin:100% 0;-webkit-text-stroke:0.5px currentColor;">651,53 €</div>
<div class="t" style="right:205.70px;top:785.69px;font-size:11px;color:#111;transform:scaleX(0.8600);transform-origin:100% 0;-webkit-text-stroke:0.5px currentColor;">912,14 €</div>
<div class="t" style="right:119.70px;top:785.69px;font-size:11px;color:#111;transform:scaleX(0.8600);transform-origin:100% 0;-webkit-text-stroke:0.5px currentColor;">879,57 €</div>
<div class="t" style="right:31.40px;top:785.69px;font-size:11px;color:#111;transform:scaleX(0.8600);transform-origin:100% 0;-webkit-text-stroke:0.5px currentColor;">846,99 €</div>
<div class="ab" style="left:60px;top:801px;width:1106px;height:22px;background:#ffffff"></div>
<div class="ab" style="left:51px;top:801px;width:9px;height:22px;background:#ebebeb;border-bottom:1px solid #a0a0a0;border-right:1px solid #a0a0a0"></div>
<div class="t" style="left:61.10px;top:807.14px;font-size:11px;color:#111;transform:scaleX(0.8200);transform-origin:0 0;-webkit-text-stroke:0.5px currentColor;">GIENGER</div>
<div class="t" style="left:163.70px;top:807.14px;font-size:11px;color:#111;transform:scaleX(0.9096);transform-origin:0 0;-webkit-text-stroke:0.5px currentColor;">064</div>
<div class="t" style="left:223.70px;top:807.14px;font-size:11px;color:#111;transform:scaleX(0.9227);transform-origin:0 0;-webkit-text-stroke:0.5px currentColor;">ALLUWN</div>
<div class="t" style="left:309.40px;top:807.14px;font-size:11px;color:#111;transform:scaleX(0.8412);transform-origin:0 0;-webkit-text-stroke:0.5px currentColor;">ALLURE</div>
<div class="t" style="left:496.70px;top:805.14px;font-size:11px;color:#111;transform:scaleX(0.9313);transform-origin:0 0;-webkit-text-stroke:0.5px currentColor;">Einhand-AP-Badebatterie Neu Allure</div>
<div class="t" style="left:711.10px;top:807.14px;font-size:11px;color:#111;transform:scaleX(0.8249);transform-origin:0 0;-webkit-text-stroke:0.5px currentColor;">ST</div>
<div class="t" style="right:376.70px;top:807.14px;font-size:11px;color:#111;transform:scaleX(0.8600);transform-origin:100% 0;-webkit-text-stroke:0.5px currentColor;">1.257,00 €</div>
<div class="t" style="right:291.70px;top:807.14px;font-size:11px;color:#111;transform:scaleX(0.8600);transform-origin:100% 0;-webkit-text-stroke:0.5px currentColor;">801,34 €</div>
<div class="t" style="right:205.70px;top:807.14px;font-size:11px;color:#111;transform:scaleX(0.8600);transform-origin:100% 0;-webkit-text-stroke:0.5px currentColor;">1.121,88 €</div>
<div class="t" style="right:119.70px;top:807.14px;font-size:11px;color:#111;transform:scaleX(0.8600);transform-origin:100% 0;-webkit-text-stroke:0.5px currentColor;">1.081,81 €</div>
<div class="t" style="right:31.40px;top:807.14px;font-size:11px;color:#111;transform:scaleX(0.8600);transform-origin:100% 0;-webkit-text-stroke:0.5px currentColor;">1.041,74 €</div>
<svg style="left:53px;top:722px" width="5" height="8"><path d="M0.5 0.5 L4.5 4 L0.5 7.5Z" fill="#222"/></svg>
<div class="ab" style="left:162px;top:591px;width:1px;height:225px;background:#b8b8b8"></div>
<div class="ab" style="left:222px;top:591px;width:1px;height:225px;background:#b8b8b8"></div>
<div class="ab" style="left:308px;top:591px;width:1px;height:225px;background:#b8b8b8"></div>
<div class="ab" style="left:495px;top:591px;width:1px;height:225px;background:#b8b8b8"></div>
<div class="ab" style="left:709px;top:591px;width:1px;height:225px;background:#b8b8b8"></div>
<div class="ab" style="left:739px;top:591px;width:1px;height:225px;background:#b8b8b8"></div>
<div class="ab" style="left:825px;top:591px;width:1px;height:225px;background:#b8b8b8"></div>
<div class="ab" style="left:910px;top:591px;width:1px;height:225px;background:#b8b8b8"></div>
<div class="ab" style="left:996px;top:591px;width:1px;height:225px;background:#b8b8b8"></div>
<div class="ab" style="left:1082px;top:591px;width:1px;height:225px;background:#b8b8b8"></div>
<div class="ab" style="left:1166px;top:591px;width:14px;height:225px;background:#dadada"></div>
<svg style="left:1169px;top:595px" width="9" height="6"><path d="M1 5 L4.5 1.5 L8 5" stroke="#333" stroke-width="1.8" fill="none"/></svg>
<div class="ab" style="left:1166px;top:605px;width:14px;height:20px;background:#a6a6a6"></div>
<div class="ab" style="left:1187px;top:0;width:1px;height:816px;background:#2a2a2a"></div>
<div class="ab" style="left:1188px;top:0;width:12px;height:67px;background:#e6e6e6"></div>
<div class="ab" style="left:1188px;top:67px;width:12px;height:278px;background:#fff"></div>
<div class="ab" style="left:1190px;top:72px;width:14px;height:18px;border:1px solid #888;border-radius:3px;background:#fff"></div>
<div class="t" style="left:1193px;top:76px;font-size:11px;color:#333">P</div>
<div class="ab" style="left:1194px;top:95px;width:10px;height:14px;border:2px solid #333"></div>
<div class="ab" style="left:1188px;top:153px;width:12px;height:6px;background:#cfcfcf"></div>
<div class="ab" style="left:1188px;top:185px;width:12px;height:16px;overflow:hidden"><div class="t" style="left:-4.5px;top:5px;font-size:11px;color:#222">e</div></div>
<svg style="left:1195px;top:191px" width="8" height="6"><path d="M0.5 0.5 L4 4.5 L7.5 0.5" stroke="#222" stroke-width="1.4" fill="none"/></svg>
<div class="ab" style="left:1188px;top:243px;width:12px;height:2px;background:#1f6fd0"></div>
<div class="ab" style="left:1188px;top:268px;width:12px;height:1px;background:#dedede"></div>
<div class="ab" style="left:1188px;top:345px;width:12px;height:471px;background:#e4e2df"></div>
<div class="ab" style="left:1188px;top:345px;width:12px;height:1px;background:#a8a4a0"></div>
<div class="ab" style="left:1188px;top:385px;width:12px;height:1px;background:#a8a4a0"></div>
<div class="ab" style="left:1189px;top:365px;width:11px;height:1px;border-top:1px dotted #b0aca8"></div>
<div class="ab" style="left:1188px;top:424px;width:12px;height:1px;background:#a8a4a0"></div>
<div class="ab" style="left:1189px;top:405px;width:11px;height:1px;border-top:1px dotted #b0aca8"></div>
<div class="ab" style="left:1188px;top:464px;width:12px;height:1px;background:#a8a4a0"></div>
<div class="ab" style="left:1189px;top:444px;width:11px;height:1px;border-top:1px dotted #b0aca8"></div>
<div class="ab" style="left:1188px;top:503px;width:12px;height:1px;background:#a8a4a0"></div>
<div class="ab" style="left:1189px;top:484px;width:11px;height:1px;border-top:1px dotted #b0aca8"></div>
<div class="ab" style="left:1188px;top:543px;width:12px;height:1px;background:#a8a4a0"></div>
<div class="ab" style="left:1189px;top:523px;width:11px;height:1px;border-top:1px dotted #b0aca8"></div>
<div class="ab" style="left:1188px;top:582px;width:12px;height:1px;background:#a8a4a0"></div>
<div class="ab" style="left:1189px;top:563px;width:11px;height:1px;border-top:1px dotted #b0aca8"></div>
<div class="ab" style="left:1188px;top:622px;width:12px;height:1px;background:#a8a4a0"></div>
<div class="ab" style="left:1189px;top:602px;width:11px;height:1px;border-top:1px dotted #b0aca8"></div>
<div class="ab" style="left:1188px;top:661px;width:12px;height:1px;background:#a8a4a0"></div>
<div class="ab" style="left:1189px;top:642px;width:11px;height:1px;border-top:1px dotted #b0aca8"></div>
<div class="ab" style="left:1188px;top:701px;width:12px;height:1px;background:#a8a4a0"></div>
<div class="ab" style="left:1189px;top:681px;width:11px;height:1px;border-top:1px dotted #b0aca8"></div>
<div class="ab" style="left:1188px;top:740px;width:12px;height:1px;background:#a8a4a0"></div>
<div class="ab" style="left:1189px;top:721px;width:11px;height:1px;border-top:1px dotted #b0aca8"></div>
<div class="ab" style="left:1188px;top:780px;width:12px;height:1px;background:#a8a4a0"></div>
<div class="ab" style="left:1189px;top:760px;width:11px;height:1px;border-top:1px dotted #b0aca8"></div>
<div class="ab" style="left:1189px;top:800px;width:11px;height:1px;border-top:1px dotted #b0aca8"></div>
</body></html>
